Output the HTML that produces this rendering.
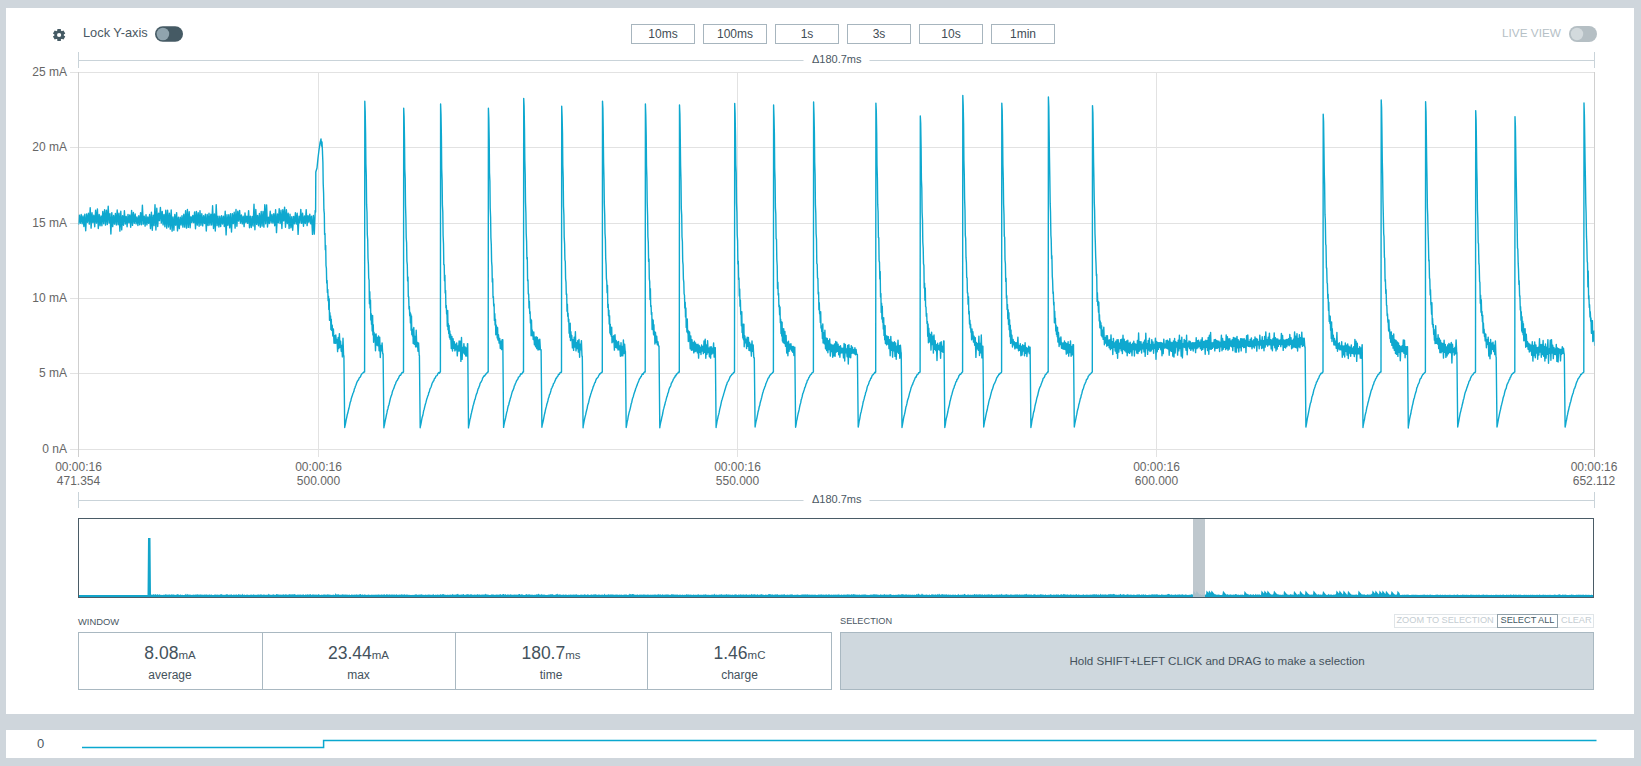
<!DOCTYPE html>
<html><head><meta charset="utf-8">
<style>
*{margin:0;padding:0;box-sizing:border-box}
html,body{width:1641px;height:766px;overflow:hidden;background:#cfd6dc;font-family:"Liberation Sans",sans-serif}
.abs{position:absolute}
#panel{position:absolute;left:6px;top:8px;width:1628px;height:706px;background:#fff}
#strip{position:absolute;left:6px;top:730px;width:1628px;height:28px;background:#fff}
.t{position:absolute;white-space:nowrap;line-height:1}
.btn{position:absolute;top:24px;width:64px;height:20px;border:1px solid #a7b5be;background:#fff;color:#3f4c55;font-size:12px;text-align:center;line-height:18px}
.cell{position:absolute;top:632px;height:58px;text-align:center;color:#44525c}
.cell .v{position:absolute;left:0;right:0;top:13px;font-size:17.5px;line-height:1}
.cell .v small{font-size:11.5px}
.cell .l{position:absolute;left:0;right:0;top:37px;font-size:12px;line-height:1}
</style></head><body>
<div id="panel"></div>
<div id="strip"></div>
<svg class="abs" style="left:0;top:0" width="1641" height="766" viewBox="0 0 1641 766">
  <!-- gear -->
  <g transform="translate(59.1,35)" fill="#455a64">
    <circle r="4.7"/>
    <rect x="-1.8" y="-6.1" width="3.6" height="12.2" rx="0.3"/>
    <rect x="-1.8" y="-6.1" width="3.6" height="12.2" rx="0.3" transform="rotate(60)"/>
    <rect x="-1.8" y="-6.1" width="3.6" height="12.2" rx="0.3" transform="rotate(120)"/>
    <circle r="2.1" fill="#fff"/>
  </g>
  <!-- lock toggle -->
  <rect x="155" y="26.2" width="28" height="15.6" rx="7.8" fill="#455a64"/>
  <circle cx="162.9" cy="34" r="6.3" fill="#90a4ae"/>
  <!-- live view toggle -->
  <rect x="1569" y="26" width="28" height="16" rx="8" fill="#b5bfc4"/>
  <circle cx="1577" cy="34" r="6.2" fill="#d3dadd"/>

  <!-- delta lines -->
  <g stroke="#c9d3d9" stroke-width="1" fill="none">
    <path d="M78.5,60.5 H803.5 M869.5,60.5 H1594.5 M78.5,52 V68 M1594.5,52 V68"/>
    <path d="M78.5,500.5 H803.5 M869.5,500.5 H1594.5 M78.5,492 V508 M1594.5,492 V508"/>
  </g>
  <!-- grid -->
  <g stroke="#e2e2e2" stroke-width="1" fill="none">
    <path d="M70,72.5 H1594 M70,147.5 H1594 M70,223.5 H1594 M70,298.5 H1594 M70,373.5 H1594 M70,449.5 H1594"/>
    <path d="M318.5,72 V457 M737.5,72 V457 M1156.5,72 V457"/>
  </g>
  <g stroke="#cfcfcf" stroke-width="1" fill="none">
    <path d="M78.5,72 V457 M1594.5,72 V457"/>
  </g>
  <!-- y labels -->
  <g font-family="Liberation Sans" font-size="12" fill="#666" text-anchor="end">
    <text x="67" y="75.7">25 mA</text>
    <text x="67" y="150.7">20 mA</text>
    <text x="67" y="226.7">15 mA</text>
    <text x="67" y="301.7">10 mA</text>
    <text x="67" y="376.7">5 mA</text>
    <text x="67" y="452.7">0 nA</text>
  </g>
  <g font-family="Liberation Sans" font-size="12" fill="#666" text-anchor="middle">
    <text x="78.5" y="471">00:00:16</text><text x="78.5" y="485">471.354</text>
    <text x="318.5" y="471">00:00:16</text><text x="318.5" y="485">500.000</text>
    <text x="737.5" y="471">00:00:16</text><text x="737.5" y="485">550.000</text>
    <text x="1156.5" y="471">00:00:16</text><text x="1156.5" y="485">600.000</text>
    <text x="1594" y="471">00:00:16</text><text x="1594" y="485">652.112</text>
  </g>
  <!-- waveform -->
  <clipPath id="pc"><rect x="78.5" y="60" width="1516" height="400"/></clipPath>
  <path clip-path="url(#pc)" d="M78.5,224.8 79.4,215.1 80.3,223.2 81.2,214.5 82.1,223.7 83.0,215.9 83.9,226.5 84.8,214.2 85.7,230.8 86.6,214.0 87.5,222.2 88.4,213.3 89.3,224.1 90.2,207.8 91.1,228.1 92.0,212.7 92.9,222.5 93.8,215.3 94.7,226.8 95.6,210.3 96.5,223.1 97.4,208.9 98.3,228.5 99.2,214.5 100.1,225.8 101.0,215.9 101.9,225.7 102.8,211.4 103.7,223.7 104.6,209.8 105.5,225.1 106.4,210.1 107.3,224.5 108.2,206.3 109.1,223.0 110.0,213.6 110.9,234.0 111.8,212.6 112.7,226.6 113.6,215.5 114.5,224.1 115.4,213.5 116.3,225.0 117.2,210.0 118.1,224.8 119.0,213.1 119.9,231.1 120.8,211.3 121.7,229.9 122.6,215.6 123.5,225.2 124.4,210.7 125.3,224.0 126.2,216.4 127.1,226.7 128.0,214.4 128.9,222.7 129.8,214.9 130.7,227.3 131.6,210.4 132.5,225.4 133.4,212.5 134.3,223.2 135.2,214.0 136.1,223.9 137.0,216.9 137.9,225.5 138.8,215.7 139.7,224.7 140.6,212.6 141.5,224.7 142.4,205.2 143.3,224.1 144.2,216.1 145.1,226.1 146.0,214.6 146.9,224.9 147.8,217.0 148.7,223.3 149.6,214.5 150.5,228.6 151.4,212.3 152.3,230.3 153.2,215.2 154.1,225.6 155.0,204.8 155.9,230.0 156.8,208.2 157.7,226.5 158.6,213.1 159.5,220.6 160.4,207.4 161.3,223.0 162.2,211.4 163.1,224.9 164.0,214.4 164.9,226.7 165.8,210.1 166.7,228.1 167.6,210.2 168.5,227.0 169.4,213.2 170.3,229.1 171.2,210.0 172.1,231.1 173.0,217.0 173.9,230.2 174.8,214.5 175.7,225.2 176.6,212.6 177.5,230.9 178.4,217.1 179.3,228.6 180.2,217.2 181.1,225.0 182.0,215.7 182.9,227.1 183.8,214.3 184.7,227.1 185.6,210.7 186.5,228.1 187.4,209.5 188.3,227.4 189.2,211.7 190.1,227.8 191.0,216.6 191.9,222.4 192.8,215.4 193.7,222.6 194.6,211.9 195.5,228.7 196.4,211.4 197.3,225.1 198.2,212.7 199.1,226.3 200.0,210.8 200.9,225.3 201.8,213.8 202.7,225.9 203.6,215.7 204.5,223.5 205.4,214.1 206.3,231.0 207.2,214.5 208.1,225.5 209.0,213.3 209.9,225.1 210.8,214.3 211.7,225.0 212.6,205.8 213.5,228.5 214.4,214.0 215.3,231.0 216.2,204.6 217.1,225.6 218.0,216.2 218.9,227.0 219.8,216.3 220.7,226.5 221.6,215.8 222.5,224.0 223.4,216.3 224.3,226.5 225.2,211.3 226.1,234.9 227.0,214.8 227.9,225.2 228.8,214.8 229.7,227.9 230.6,213.6 231.5,232.0 232.4,213.8 233.3,223.6 234.2,212.2 235.1,228.1 236.0,209.5 236.9,226.3 237.8,211.1 238.7,221.1 239.6,210.4 240.5,223.1 241.4,215.0 242.3,223.9 243.2,216.1 244.1,226.6 245.0,212.9 245.9,222.6 246.8,216.2 247.7,223.4 248.6,210.6 249.5,227.8 250.4,216.1 251.3,227.5 252.2,216.5 253.1,226.0 254.0,204.3 254.9,229.8 255.8,209.5 256.7,224.4 257.6,215.4 258.5,225.7 259.4,213.5 260.3,227.2 261.2,211.5 262.1,226.1 263.0,211.5 263.9,227.1 264.8,204.7 265.7,223.7 266.6,204.9 267.5,227.0 268.4,217.1 269.3,223.5 270.2,211.3 271.1,222.8 272.0,214.5 272.9,223.1 273.8,213.7 274.7,225.8 275.6,209.7 276.5,232.6 277.4,214.0 278.3,222.8 279.2,208.7 280.1,223.5 281.0,210.2 281.9,228.5 282.8,209.8 283.7,220.9 284.6,207.1 285.5,227.3 286.4,209.7 287.3,223.6 288.2,213.3 289.1,228.5 290.0,214.3 290.9,227.7 291.8,216.6 292.7,230.3 293.6,216.4 294.5,223.7 295.4,212.7 296.3,224.0 297.2,213.3 298.1,234.4 299.0,216.3 299.9,222.9 300.8,209.4 301.7,223.4 302.6,213.3 303.5,226.2 304.4,216.0 305.3,223.5 306.2,209.6 307.1,225.6 308.0,215.6 308.9,222.2 309.8,214.1 310.7,223.8 311.6,216.1 312.5,234.4 313.4,215.5 314.3,234.1 315.2,210.5 315.6,212.0 315.8,172.0 317.0,168.0 318.0,158.0 319.0,150.0 320.0,143.0 321.0,139.0 321.5,146.0 322.0,142.0 322.5,152.0 322.5,153.0 322.9,162.5 323.2,183.5 323.6,193.0 323.9,209.9 324.3,213.6 324.6,234.5 325.0,233.5 325.3,249.8 325.7,245.5 326.0,265.5 326.4,268.4 326.7,283.0 327.1,280.4 327.4,292.5 327.8,289.5 328.1,300.8 328.5,296.1 328.8,309.6 329.2,298.7 329.5,320.3 329.9,312.6 330.2,319.6 330.6,316.0 330.9,329.6 331.3,319.2 331.6,330.3 332.2,325.1 332.8,336.0 333.4,328.9 334.0,343.1 334.6,335.8 335.2,343.4 335.8,335.0 336.4,343.1 337.0,339.5 337.6,351.6 338.2,337.4 338.8,348.6 339.4,333.6 340.0,347.4 340.6,341.3 341.2,351.2 341.8,345.5 342.4,356.9 343.0,338.3 343.6,355.8 343.9,355.8 344.7,427.6 344.7,427.0 345.2,425.0 345.7,422.6 346.2,419.7 346.7,417.6 347.3,414.5 347.8,413.1 348.3,410.6 348.8,408.8 349.3,406.7 349.8,404.3 350.3,402.0 350.8,401.2 351.3,398.4 351.8,397.1 352.4,395.2 352.9,393.5 353.4,392.5 353.9,391.3 354.4,388.9 354.9,388.0 355.4,386.2 355.9,385.2 356.4,383.8 356.9,382.3 357.5,381.2 358.0,380.2 358.5,380.0 359.0,378.6 359.5,377.4 360.0,377.4 360.5,376.7 361.0,375.3 361.5,374.3 362.0,373.8 362.6,373.1 363.1,372.9 363.6,372.2 364.1,372.0 364.6,372.0 364.8,101.3 365.2,111.5 365.6,133.7 365.9,164.1 366.3,175.6 366.6,204.4 367.0,212.3 367.3,234.5 367.7,239.6 368.0,258.0 368.4,264.2 368.7,278.2 369.1,280.1 369.4,303.8 369.8,291.7 370.1,307.9 370.5,299.9 370.8,320.0 371.2,313.6 371.5,324.3 371.9,320.8 372.2,331.1 372.6,315.5 372.9,334.9 373.3,324.8 373.6,342.3 374.0,332.2 374.3,337.9 374.9,334.3 375.5,350.7 376.1,333.9 376.7,345.0 377.3,337.5 377.9,345.8 378.5,335.9 379.1,350.8 379.7,337.2 380.3,357.5 380.9,345.4 381.5,350.9 382.1,343.0 382.7,353.8 383.1,353.8 383.9,427.7 383.9,427.0 384.4,425.0 384.9,422.3 385.4,419.8 385.9,417.6 386.4,415.0 386.9,412.9 387.4,410.1 387.9,408.9 388.4,406.2 388.9,405.0 389.4,402.8 389.9,400.5 390.4,398.4 390.9,396.8 391.4,395.6 391.9,394.0 392.4,391.7 392.9,390.2 393.4,389.2 394.0,387.9 394.5,386.3 395.0,384.8 395.5,384.0 396.0,382.2 396.5,381.4 397.0,380.5 397.5,380.1 398.0,378.8 398.5,378.2 399.0,376.9 399.5,375.8 400.0,375.1 400.5,375.3 401.0,374.4 401.5,373.4 402.0,372.5 402.5,372.7 403.0,372.5 403.5,372.0 403.7,108.2 404.1,116.9 404.5,138.9 404.8,169.0 405.2,178.1 405.5,205.1 405.9,218.1 406.2,237.8 406.6,242.7 406.9,261.1 407.3,264.8 407.6,280.9 408.0,276.9 408.3,296.8 408.7,296.7 409.0,309.1 409.4,306.4 409.7,315.8 410.1,312.2 410.4,322.9 410.8,314.0 411.1,330.3 411.5,315.9 411.8,334.5 412.2,330.4 412.5,336.0 412.9,329.1 413.2,343.6 413.8,327.5 414.4,344.3 415.0,336.4 415.6,346.9 416.2,330.3 416.8,346.8 417.4,342.4 418.0,351.3 418.6,343.0 419.2,355.5 419.4,355.5 420.2,427.8 420.2,427.0 420.7,425.1 421.2,422.7 421.7,419.6 422.2,417.2 422.7,415.8 423.2,413.4 423.7,410.5 424.2,409.2 424.7,406.8 425.2,404.8 425.8,402.9 426.3,400.9 426.8,398.9 427.3,397.5 427.8,395.9 428.3,395.0 428.8,392.4 429.3,391.9 429.8,389.6 430.3,388.3 430.8,387.5 431.3,386.2 431.8,384.5 432.3,382.9 432.8,382.3 433.3,381.1 433.8,380.7 434.3,378.9 434.8,378.2 435.3,378.0 435.9,376.1 436.4,375.9 436.9,375.6 437.4,375.0 437.9,373.5 438.4,373.0 438.9,372.5 439.4,373.2 439.9,372.0 440.4,372.0 440.6,104.0 441.0,114.2 441.4,136.2 441.7,168.7 442.1,180.1 442.4,204.7 442.8,212.1 443.1,235.2 443.5,243.9 443.8,264.7 444.2,264.6 444.5,280.8 444.9,275.3 445.2,293.0 445.6,290.5 445.9,307.7 446.3,305.5 446.6,314.1 447.0,314.1 447.3,326.2 447.7,310.4 448.0,329.8 448.4,323.6 448.7,333.6 449.1,325.5 449.4,337.2 449.8,330.9 450.1,339.1 450.7,334.4 451.3,348.5 451.9,336.4 452.5,351.0 453.1,338.8 453.7,348.3 454.3,341.7 454.9,350.9 455.5,344.2 456.1,349.8 456.7,343.0 457.3,355.9 457.9,346.0 458.5,351.0 459.1,341.0 459.7,351.0 460.3,341.2 460.9,361.4 461.5,337.4 462.1,359.4 462.7,347.5 463.3,352.7 463.9,343.6 464.5,354.0 465.1,346.9 465.7,356.0 466.3,347.9 466.9,356.1 467.5,343.6 467.7,343.6 468.5,427.9 468.5,427.0 469.0,424.9 469.5,422.2 470.0,419.2 470.5,417.7 471.0,414.8 471.5,412.9 472.0,410.5 472.5,408.8 473.0,406.1 473.6,404.2 474.1,402.3 474.6,400.3 475.1,399.3 475.6,397.2 476.1,395.2 476.6,393.7 477.1,392.8 477.6,390.7 478.1,388.9 478.6,388.2 479.1,386.6 479.6,385.7 480.1,383.4 480.6,382.7 481.1,382.0 481.6,381.0 482.1,380.0 482.6,378.1 483.1,377.5 483.7,376.4 484.2,375.7 484.7,376.0 485.2,374.8 485.7,374.6 486.2,373.4 486.7,373.5 487.2,372.6 487.7,372.0 488.2,372.0 488.4,108.2 488.8,117.9 489.2,138.8 489.5,172.7 489.9,181.0 490.2,207.8 490.6,217.3 490.9,237.6 491.3,244.7 491.6,261.6 492.0,266.4 492.3,282.0 492.7,278.6 493.0,297.5 493.4,296.6 493.7,305.9 494.1,303.9 494.4,320.4 494.8,313.6 495.1,325.1 495.5,319.2 495.8,334.8 496.2,325.0 496.5,332.1 496.9,326.9 497.2,337.9 497.6,327.6 497.9,340.0 498.5,334.7 499.1,343.1 499.7,338.4 500.3,348.4 500.9,341.2 501.5,349.6 502.1,339.8 502.8,339.8 503.6,427.4 503.6,427.0 504.1,424.3 504.6,421.9 505.1,420.1 505.6,417.9 506.2,414.9 506.7,412.4 507.2,410.9 507.7,408.2 508.2,405.9 508.7,405.0 509.2,402.5 509.7,401.1 510.2,398.8 510.7,397.6 511.3,395.4 511.8,393.4 512.3,391.6 512.8,390.7 513.3,389.4 513.8,388.3 514.3,386.0 514.8,385.3 515.3,383.8 515.8,382.7 516.4,381.2 516.9,380.3 517.4,379.6 517.9,379.1 518.4,377.2 518.9,376.9 519.4,376.5 519.9,376.0 520.4,374.4 520.9,373.7 521.5,374.1 522.0,373.7 522.5,372.7 523.0,371.8 523.5,372.0 523.7,98.4 524.1,106.0 524.5,128.8 524.8,159.3 525.2,174.0 525.5,201.7 525.9,212.9 526.2,233.1 526.6,241.4 526.9,259.1 527.3,257.5 527.6,280.8 528.0,280.0 528.3,294.0 528.7,294.0 529.0,308.0 529.4,301.2 529.7,313.5 530.1,311.6 530.4,322.9 530.8,319.1 531.1,335.8 531.5,320.2 531.8,332.5 532.2,329.9 532.5,335.9 532.9,332.0 533.2,339.5 533.8,332.0 534.4,344.7 535.0,337.1 535.6,346.7 536.2,336.7 536.8,348.6 537.4,337.5 538.0,350.0 538.6,340.0 539.2,349.6 539.8,339.2 540.4,349.7 541.1,349.7 541.9,427.2 541.9,427.0 542.4,424.2 542.9,422.4 543.4,420.0 543.9,417.3 544.4,414.6 544.9,412.8 545.4,410.2 545.9,408.1 546.4,406.4 546.9,404.0 547.4,402.5 547.9,400.7 548.4,398.3 548.9,397.3 549.4,394.9 549.9,394.1 550.4,392.5 550.9,390.7 551.4,388.7 552.0,387.8 552.5,386.3 553.0,385.7 553.5,383.5 554.0,383.2 554.5,382.2 555.0,380.8 555.5,379.9 556.0,378.2 556.5,378.3 557.0,376.9 557.5,376.7 558.0,375.9 558.5,374.3 559.0,374.5 559.5,374.1 560.0,372.6 560.5,372.5 561.0,372.6 561.5,372.0 561.7,106.2 562.1,116.2 562.5,133.1 562.8,164.9 563.2,177.2 563.5,206.2 563.9,214.7 564.2,237.1 564.6,244.0 564.9,259.6 565.3,261.7 565.6,278.8 566.0,282.2 566.3,294.4 566.7,294.0 567.0,311.2 567.4,304.1 567.7,316.3 568.1,313.2 568.4,321.8 568.8,319.1 569.1,333.3 569.5,325.2 569.8,337.3 570.2,323.3 570.5,340.6 570.9,331.6 571.2,339.5 571.8,335.5 572.4,347.9 573.0,339.6 573.6,350.4 574.2,337.1 574.8,347.1 575.4,331.8 576.0,350.9 576.6,342.6 577.2,348.5 577.8,340.6 578.4,352.1 579.0,339.4 579.6,357.3 580.2,344.1 580.8,349.9 581.4,340.6 582.0,356.1 582.3,356.1 583.1,427.7 583.1,427.0 583.6,424.2 584.1,421.3 584.6,418.9 585.1,416.6 585.6,414.9 586.1,412.4 586.6,410.3 587.1,408.6 587.6,405.6 588.2,403.7 588.7,402.2 589.2,399.6 589.7,397.7 590.2,396.3 590.7,394.3 591.2,392.9 591.7,391.2 592.2,390.1 592.7,388.6 593.2,386.7 593.7,385.9 594.2,384.4 594.7,382.8 595.2,382.5 595.7,380.6 596.2,379.4 596.7,378.4 597.2,378.1 597.8,377.5 598.3,376.6 598.8,375.4 599.3,374.6 599.8,373.6 600.3,373.8 600.8,373.2 601.3,372.5 601.8,372.5 602.3,372.0 602.5,101.1 602.9,108.4 603.2,127.4 603.6,162.5 604.0,179.3 604.3,203.2 604.7,214.4 605.0,233.1 605.4,239.3 605.7,258.2 606.1,264.8 606.4,278.3 606.8,281.9 607.1,292.8 607.5,285.3 607.8,307.4 608.2,304.1 608.5,315.7 608.9,310.1 609.2,324.1 609.6,315.7 609.9,333.0 610.3,324.2 610.6,334.6 611.0,329.7 611.3,336.2 611.7,327.3 612.0,342.8 612.6,336.6 613.2,341.9 613.8,335.6 614.4,350.1 615.0,334.7 615.6,347.4 616.2,340.4 616.8,348.0 617.4,342.0 618.0,350.0 618.6,341.5 619.2,349.7 619.8,346.0 620.4,356.3 621.0,342.6 621.6,355.7 622.2,346.4 622.8,355.9 623.4,340.0 624.0,353.6 624.6,344.1 625.2,351.3 625.4,351.3 626.2,427.6 626.2,427.0 626.7,425.0 627.2,421.6 627.7,419.9 628.2,416.5 628.7,414.4 629.2,412.1 629.7,410.5 630.2,408.6 630.7,406.3 631.2,403.8 631.7,402.5 632.2,399.9 632.7,398.0 633.2,397.0 633.7,394.9 634.2,393.3 634.7,391.7 635.2,390.6 635.7,388.5 636.2,387.5 636.7,386.0 637.2,384.9 637.7,383.1 638.2,382.3 638.7,381.0 639.2,379.6 639.7,378.5 640.2,378.1 640.7,376.6 641.2,376.8 641.7,375.1 642.2,374.3 642.7,373.7 643.2,374.2 643.7,373.0 644.2,372.3 644.7,371.8 645.2,372.0 645.4,104.0 645.8,114.9 646.2,135.1 646.5,165.4 646.9,177.8 647.2,202.6 647.6,215.5 647.9,236.8 648.3,242.4 648.6,261.5 649.0,259.0 649.3,278.9 649.7,281.7 650.0,299.5 650.4,288.6 650.7,306.6 651.1,305.7 651.4,314.4 651.8,312.5 652.1,329.6 652.5,319.2 652.8,329.2 653.2,320.3 653.5,334.2 653.9,324.6 654.2,335.4 654.6,331.5 654.9,344.0 655.5,332.5 656.1,342.6 656.7,336.1 657.3,344.8 657.9,341.6 658.5,346.0 659.0,346.0 659.8,427.8 659.8,427.0 660.3,424.3 660.8,421.8 661.3,420.2 661.8,417.3 662.3,415.5 662.8,413.0 663.3,410.1 663.8,408.4 664.3,406.4 664.8,404.8 665.3,402.4 665.8,400.9 666.3,398.9 666.8,396.8 667.3,395.9 667.8,393.3 668.3,392.6 668.8,390.3 669.3,388.6 669.8,387.4 670.3,386.8 670.8,385.7 671.3,383.3 671.8,382.7 672.3,381.6 672.8,380.9 673.3,379.2 673.8,378.6 674.3,377.5 674.8,377.3 675.3,375.8 675.8,375.9 676.3,374.5 676.8,373.8 677.3,373.8 677.8,373.1 678.3,372.2 678.8,372.5 679.3,372.0 679.5,105.0 679.9,114.1 680.2,132.8 680.6,165.7 681.0,180.4 681.3,208.6 681.7,215.1 682.0,236.8 682.4,241.7 682.7,261.1 683.1,264.9 683.4,279.1 683.8,282.2 684.1,293.7 684.5,295.3 684.8,308.1 685.2,302.3 685.5,317.0 685.9,308.0 686.2,327.6 686.6,320.7 686.9,331.9 687.3,318.9 687.6,332.9 688.0,330.2 688.3,341.5 688.7,331.2 689.0,341.1 689.6,332.0 690.2,348.7 690.8,336.0 691.4,350.3 692.0,339.7 692.6,350.0 693.2,342.6 693.8,352.9 694.4,341.1 695.0,351.6 695.6,342.9 696.2,351.0 696.8,344.7 697.4,352.9 698.0,344.1 698.6,358.1 699.2,345.5 699.8,352.3 700.4,347.3 701.0,354.5 701.6,345.0 702.2,351.1 702.8,346.5 703.4,353.6 704.0,341.0 704.6,352.4 705.2,339.1 705.8,358.3 706.4,345.0 707.0,354.3 707.6,340.7 708.2,352.6 708.8,348.3 709.4,356.7 710.0,346.9 710.6,358.1 711.2,346.7 711.8,354.1 712.4,348.3 713.0,353.0 713.6,342.9 714.2,357.1 714.8,347.6 715.3,347.6 716.1,427.6 716.1,427.0 716.6,424.2 717.1,421.2 717.6,419.2 718.1,416.4 718.7,414.4 719.2,412.2 719.7,409.3 720.2,407.3 720.7,405.3 721.2,402.8 721.7,400.5 722.2,399.2 722.7,397.4 723.3,395.5 723.8,393.6 724.3,392.1 724.8,390.3 725.3,388.7 725.8,387.0 726.3,385.4 726.8,384.4 727.3,382.4 727.9,381.6 728.4,380.9 728.9,379.7 729.4,378.6 729.9,377.2 730.4,376.5 730.9,375.7 731.4,375.2 731.9,374.3 732.5,374.0 733.0,373.7 733.5,372.4 734.0,372.5 734.5,372.0 734.7,103.4 735.1,113.3 735.5,135.2 735.8,164.8 736.2,172.8 736.5,202.7 736.9,212.2 737.2,234.7 737.6,240.6 737.9,264.1 738.3,261.1 738.6,279.4 739.0,277.9 739.3,296.1 739.7,289.0 740.0,306.3 740.4,299.9 740.7,314.2 741.1,312.0 741.4,325.8 741.8,311.8 742.1,332.6 742.5,324.5 742.8,337.9 743.2,324.3 743.5,339.7 743.9,324.1 744.2,346.8 744.8,335.9 745.4,342.7 746.0,339.2 746.6,348.5 747.2,337.3 747.8,346.2 748.4,337.4 749.0,350.4 749.6,342.5 750.2,350.9 750.8,344.2 751.4,356.1 752.0,340.9 752.6,351.4 753.2,345.0 753.8,357.7 754.3,357.7 755.1,427.0 755.1,427.0 755.6,423.9 756.1,421.2 756.6,419.4 757.1,416.9 757.6,414.3 758.1,411.7 758.7,409.5 759.2,406.8 759.7,405.6 760.2,402.7 760.7,401.0 761.2,399.3 761.7,397.4 762.2,395.1 762.7,393.1 763.2,391.7 763.7,389.6 764.2,388.9 764.8,386.8 765.3,386.0 765.8,383.9 766.3,382.8 766.8,381.4 767.3,380.5 767.8,379.1 768.3,377.9 768.8,377.8 769.3,376.4 769.8,375.5 770.3,374.8 770.9,374.4 771.4,373.7 771.9,373.4 772.4,372.9 772.9,372.2 773.4,372.0 773.6,105.0 774.0,116.7 774.4,134.7 774.7,168.4 775.1,180.1 775.4,207.9 775.8,213.9 776.1,238.7 776.5,239.2 776.8,259.3 777.2,265.7 777.5,288.5 777.9,282.2 778.2,294.9 778.6,293.4 778.9,306.7 779.3,305.1 779.6,314.7 780.0,307.0 780.3,322.7 780.7,319.1 781.0,333.5 781.4,321.8 781.7,336.1 782.1,322.1 782.4,341.1 782.8,328.6 783.1,342.5 783.7,328.6 784.3,343.5 784.9,331.5 785.5,346.3 786.1,335.5 786.7,353.1 787.3,342.1 787.9,355.7 788.5,341.1 789.1,351.4 789.7,344.2 790.3,349.0 790.9,343.6 791.5,350.9 792.1,346.5 792.7,352.3 793.3,346.5 793.9,355.5 794.5,347.1 794.8,347.1 795.6,427.3 795.6,427.0 796.1,424.6 796.6,420.9 797.1,419.2 797.6,416.2 798.1,413.8 798.7,411.5 799.2,409.4 799.7,406.5 800.2,404.4 800.7,402.9 801.2,399.7 801.7,398.4 802.2,396.5 802.7,393.9 803.2,392.8 803.7,391.2 804.2,389.8 804.8,387.5 805.3,386.8 805.8,384.8 806.3,383.4 806.8,382.6 807.3,380.4 807.8,380.1 808.3,378.9 808.8,377.5 809.3,377.2 809.8,375.8 810.3,375.1 810.9,374.5 811.4,374.2 811.9,372.9 812.4,372.7 812.9,372.3 813.4,372.0 813.6,102.0 814.0,113.7 814.4,132.7 814.7,162.2 815.1,174.4 815.4,204.5 815.8,213.4 816.1,233.5 816.5,239.0 816.8,263.4 817.2,264.3 817.5,278.1 817.9,278.4 818.2,293.9 818.6,292.2 818.9,309.7 819.3,302.8 819.6,313.8 820.0,313.2 820.3,322.5 820.7,311.7 821.0,328.0 821.4,325.7 821.7,331.4 822.1,329.7 822.4,338.6 822.8,324.0 823.1,342.9 823.7,332.6 824.3,343.8 824.9,330.2 825.5,348.7 826.1,337.9 826.7,350.6 827.3,338.5 827.9,352.7 828.5,340.7 829.1,349.6 829.7,338.9 830.3,356.1 830.9,344.1 831.5,351.6 832.1,344.9 832.7,357.3 833.3,345.2 833.9,355.8 834.5,344.0 835.1,356.2 835.7,341.5 836.3,352.1 836.9,342.3 837.5,351.2 838.1,344.3 838.7,354.7 839.3,346.5 839.9,357.3 840.5,345.8 841.1,353.0 841.7,348.1 842.3,352.9 842.9,348.3 843.5,357.9 844.1,343.4 844.7,361.0 845.3,344.5 845.9,352.9 846.5,349.0 847.1,356.8 847.7,345.4 848.3,364.1 848.9,344.6 849.5,357.1 850.1,348.8 850.7,357.7 851.3,345.7 851.9,353.2 852.5,347.2 853.1,353.1 853.7,349.7 854.3,353.7 854.9,347.7 855.5,354.7 856.1,349.5 856.7,354.5 857.4,354.5 858.2,426.0 858.2,427.0 858.7,424.5 859.2,421.2 859.7,419.1 860.2,415.9 860.7,413.2 861.2,411.7 861.7,409.2 862.2,407.1 862.7,404.7 863.2,401.8 863.7,400.4 864.2,398.5 864.7,396.3 865.2,395.0 865.7,392.4 866.2,391.5 866.7,389.6 867.2,387.1 867.7,385.6 868.2,385.0 868.7,383.8 869.2,381.7 869.7,380.7 870.2,380.1 870.7,378.3 871.2,378.2 871.7,376.8 872.2,375.4 872.7,375.0 873.2,374.6 873.7,373.8 874.2,373.5 874.7,372.3 875.2,372.7 875.7,372.0 875.9,103.1 876.3,111.0 876.7,132.8 877.0,164.9 877.4,178.6 877.7,204.4 878.1,211.7 878.4,237.6 878.8,237.7 879.1,260.5 879.5,262.5 879.8,278.9 880.2,271.4 880.5,297.1 880.9,293.4 881.2,312.5 881.6,303.3 881.9,319.0 882.3,306.1 882.6,322.2 883.0,317.9 883.3,329.0 883.7,317.7 884.0,335.4 884.4,325.3 884.7,339.7 885.1,325.8 885.4,343.5 886.0,335.5 886.6,344.9 887.2,336.3 887.8,344.0 888.4,336.7 889.0,348.6 889.6,339.7 890.2,355.7 890.8,336.4 891.4,350.3 892.0,342.0 892.6,357.1 893.2,342.8 893.8,350.9 894.4,341.7 895.0,356.4 895.6,343.0 896.2,359.3 896.8,346.3 897.4,352.1 898.0,340.1 898.6,353.4 899.2,345.6 899.8,358.2 900.4,345.1 901.0,352.6 901.2,352.6 902.0,427.5 902.0,427.0 902.5,424.5 903.0,421.6 903.5,418.7 904.0,416.2 904.5,414.4 905.0,412.1 905.5,409.4 906.0,406.7 906.5,405.4 907.0,403.2 907.5,400.5 908.0,399.0 908.5,397.5 909.0,395.6 909.5,393.4 910.0,391.7 910.5,390.2 911.0,388.1 911.6,386.6 912.1,385.2 912.6,384.5 913.1,382.8 913.6,381.8 914.1,380.4 914.6,379.5 915.1,378.0 915.6,377.0 916.1,377.2 916.6,375.7 917.1,374.6 917.6,374.5 918.1,374.1 918.6,372.8 919.1,372.9 919.6,372.2 920.1,372.0 920.3,116.0 920.7,123.4 921.1,146.8 921.4,179.5 921.8,187.7 922.1,212.3 922.5,220.2 922.8,242.1 923.2,248.1 923.5,263.6 923.9,265.5 924.2,288.0 924.6,283.3 924.9,300.3 925.3,287.9 925.6,306.7 926.0,307.0 926.3,316.3 926.7,313.4 927.0,323.6 927.4,321.5 927.7,336.3 928.1,323.9 928.4,342.7 928.8,328.1 929.1,336.9 929.5,333.1 929.8,342.0 930.4,334.6 931.0,350.1 931.6,332.3 932.2,344.5 932.8,336.3 933.4,353.1 934.0,334.9 934.6,349.3 935.2,340.7 935.8,350.6 936.4,344.6 937.0,360.5 937.6,343.1 938.2,349.6 938.8,345.4 939.4,350.0 940.0,342.8 940.6,358.2 941.2,341.8 941.8,351.2 942.4,346.5 943.0,352.4 943.6,341.0 944.0,341.0 944.8,427.6 944.8,427.0 945.3,424.8 945.8,421.0 946.3,418.4 946.8,416.6 947.3,414.3 947.9,411.5 948.4,408.7 948.9,406.8 949.4,404.8 949.9,401.8 950.4,400.0 950.9,397.9 951.4,395.8 951.9,394.4 952.4,392.3 952.9,390.6 953.4,388.9 954.0,387.9 954.5,385.6 955.0,385.1 955.5,383.1 956.0,381.6 956.5,381.5 957.0,379.5 957.5,379.3 958.0,378.2 958.5,377.3 959.0,375.5 959.5,375.1 960.1,374.0 960.6,374.3 961.1,373.7 961.6,372.9 962.1,372.3 962.6,372.0 962.8,95.4 963.2,105.0 963.6,124.2 963.9,159.8 964.3,175.0 964.6,198.7 965.0,210.3 965.3,235.2 965.7,238.7 966.0,257.4 966.4,262.4 966.7,277.5 967.1,278.0 967.4,293.1 967.8,292.9 968.1,304.2 968.5,296.6 968.8,314.0 969.2,311.3 969.5,324.1 969.9,320.1 970.2,327.9 970.6,324.3 970.9,332.3 971.3,329.6 971.6,339.8 972.0,329.0 972.3,338.7 972.9,331.6 973.5,342.1 974.1,336.3 974.7,345.2 975.3,337.8 975.9,357.4 976.5,342.5 977.1,348.8 977.7,343.6 978.3,350.3 978.9,336.1 979.5,355.5 980.1,343.5 980.7,352.7 981.3,334.9 981.9,357.9 982.5,346.2 982.9,346.2 983.7,426.9 983.7,427.0 984.2,423.8 984.7,420.9 985.2,419.2 985.7,416.3 986.3,413.4 986.8,411.2 987.3,409.5 987.8,406.3 988.3,404.5 988.8,401.9 989.3,399.8 989.8,398.6 990.3,396.6 990.9,394.1 991.4,392.1 991.9,390.4 992.4,389.4 992.9,387.7 993.4,386.0 993.9,384.4 994.4,383.6 995.0,382.4 995.5,381.3 996.0,379.9 996.5,378.4 997.0,377.2 997.5,377.1 998.0,375.8 998.5,375.4 999.0,373.9 999.6,374.2 1000.1,373.1 1000.6,373.2 1001.1,372.8 1001.6,372.0 1001.8,103.1 1002.2,110.5 1002.6,135.5 1002.9,164.5 1003.3,178.9 1003.6,203.7 1004.0,214.3 1004.3,236.1 1004.7,237.4 1005.0,259.7 1005.4,263.8 1005.7,281.4 1006.1,278.2 1006.4,298.0 1006.8,295.7 1007.1,309.5 1007.5,304.5 1007.8,318.8 1008.2,309.6 1008.5,324.6 1008.9,312.8 1009.2,329.8 1009.6,319.8 1009.9,336.8 1010.3,325.1 1010.6,343.4 1011.0,330.0 1011.3,342.8 1011.9,335.3 1012.5,347.0 1013.1,339.4 1013.7,344.9 1014.3,341.8 1014.9,348.9 1015.5,342.8 1016.1,347.9 1016.7,342.7 1017.3,348.1 1017.9,337.1 1018.5,350.8 1019.1,345.7 1019.7,350.3 1020.3,343.8 1020.9,355.8 1021.5,346.3 1022.1,355.0 1022.7,344.8 1023.3,351.1 1023.9,345.6 1024.5,355.7 1025.1,342.7 1025.7,353.2 1026.3,347.5 1026.9,356.5 1027.5,348.1 1028.1,351.9 1028.7,346.3 1029.3,353.6 1029.9,347.3 1030.1,347.3 1030.9,427.5 1030.9,427.0 1031.4,424.6 1031.9,420.9 1032.4,418.7 1032.9,416.3 1033.4,413.0 1034.0,411.3 1034.5,409.0 1035.0,406.0 1035.5,403.8 1036.0,402.1 1036.5,399.6 1037.0,397.4 1037.5,396.1 1038.0,394.0 1038.5,391.7 1039.0,389.8 1039.5,388.3 1040.1,386.8 1040.6,386.0 1041.1,384.4 1041.6,383.1 1042.1,381.7 1042.6,380.6 1043.1,378.5 1043.6,378.0 1044.1,377.6 1044.6,376.7 1045.1,375.0 1045.7,374.5 1046.2,374.1 1046.7,373.2 1047.2,372.8 1047.7,371.8 1048.2,372.0 1048.4,97.0 1048.8,106.8 1049.1,128.7 1049.5,158.5 1049.8,176.5 1050.2,203.9 1050.5,211.9 1050.9,235.3 1051.2,239.4 1051.6,258.8 1051.9,255.7 1052.3,276.5 1052.6,280.2 1053.0,293.4 1053.3,291.9 1053.7,304.9 1054.0,302.1 1054.4,322.7 1054.7,311.1 1055.1,322.8 1055.4,318.1 1055.8,331.0 1056.1,325.1 1056.5,334.4 1056.8,328.7 1057.2,336.8 1057.5,327.1 1057.9,342.0 1058.5,332.5 1059.1,346.5 1059.7,338.2 1060.3,344.5 1060.9,336.9 1061.5,348.2 1062.1,342.9 1062.7,348.7 1063.3,342.9 1063.9,349.2 1064.5,341.0 1065.1,349.5 1065.7,342.8 1066.3,354.1 1066.9,343.6 1067.5,353.1 1068.1,341.8 1068.7,356.1 1069.3,344.6 1069.9,352.6 1070.5,340.9 1071.1,356.3 1071.7,346.5 1072.3,354.9 1072.9,344.8 1073.5,344.8 1074.3,426.8 1074.3,427.0 1074.8,424.0 1075.3,421.3 1075.8,419.1 1076.3,416.4 1076.8,414.2 1077.3,411.1 1077.8,409.2 1078.3,407.6 1078.8,404.7 1079.3,403.0 1079.8,400.8 1080.3,398.6 1080.8,397.6 1081.3,394.9 1081.8,393.7 1082.3,391.3 1082.8,389.5 1083.3,388.9 1083.8,386.9 1084.3,385.1 1084.8,384.1 1085.3,382.9 1085.8,382.0 1086.3,380.1 1086.8,379.1 1087.3,379.0 1087.8,377.8 1088.3,376.2 1088.8,375.6 1089.3,374.9 1089.8,374.6 1090.3,373.9 1090.8,373.6 1091.3,373.1 1091.8,372.4 1092.3,372.0 1092.5,105.6 1092.9,112.8 1093.2,132.5 1093.6,162.8 1093.9,177.7 1094.3,202.9 1094.6,210.4 1095.0,234.1 1095.3,241.6 1095.7,256.7 1096.0,263.4 1096.4,275.8 1096.7,274.2 1097.1,301.4 1097.4,292.8 1097.8,305.6 1098.1,301.1 1098.5,312.3 1098.8,302.2 1099.2,320.9 1099.5,314.7 1099.9,327.8 1100.2,320.9 1100.6,328.1 1100.9,322.7 1101.3,335.4 1101.6,325.8 1102.0,336.8 1102.6,330.1 1103.2,339.4 1103.8,327.1 1104.4,344.7 1105.0,337.7 1105.6,343.0 1106.2,335.7 1106.8,346.3 1107.4,335.6 1108.0,345.3 1108.6,340.1 1109.2,347.8 1109.8,339.7 1110.4,349.6 1111.0,334.9 1111.6,348.2 1112.2,341.7 1112.8,354.5 1113.4,338.4 1114.0,347.3 1114.6,342.9 1115.2,351.0 1115.8,341.2 1116.4,353.2 1117.0,339.7 1117.6,358.2 1118.2,339.8 1118.8,352.1 1119.4,343.2 1120.0,348.6 1120.6,339.8 1121.2,350.8 1121.8,339.3 1122.4,353.6 1123.0,335.3 1123.6,349.6 1124.2,339.3 1124.8,350.8 1125.4,341.8 1126.0,352.0 1126.6,341.0 1127.2,355.7 1127.8,340.3 1128.4,352.5 1129.0,343.3 1129.6,353.4 1130.2,342.2 1130.8,351.7 1131.4,344.5 1132.0,355.7 1132.6,343.1 1133.2,349.5 1133.8,341.2 1134.4,356.0 1135.0,343.5 1135.6,349.8 1136.2,344.5 1136.8,353.1 1137.4,340.5 1138.0,353.6 1138.6,333.0 1139.2,351.3 1139.8,341.7 1140.4,349.8 1141.0,341.6 1141.6,353.0 1142.2,344.3 1142.8,348.8 1143.4,342.1 1144.0,351.9 1144.6,340.3 1145.2,356.4 1145.8,333.3 1146.4,348.6 1147.0,343.7 1147.6,354.4 1148.2,340.5 1148.8,350.1 1149.4,338.2 1150.0,351.5 1150.6,344.6 1151.2,350.9 1151.8,339.6 1152.4,349.1 1153.0,342.0 1153.6,353.3 1154.2,344.5 1154.8,348.2 1155.4,338.1 1156.0,359.3 1156.6,341.5 1157.2,351.7 1157.8,342.4 1158.4,349.4 1159.0,342.7 1159.6,347.6 1160.2,342.4 1160.8,349.7 1161.4,342.8 1162.0,355.7 1162.6,343.3 1163.2,353.6 1163.8,339.1 1164.4,348.1 1165.0,344.1 1165.6,347.9 1166.2,340.4 1166.8,348.2 1167.4,340.2 1168.0,349.0 1168.6,341.2 1169.2,355.2 1169.8,338.6 1170.4,350.9 1171.0,342.2 1171.6,351.4 1172.2,342.8 1172.8,356.1 1173.4,341.0 1174.0,357.1 1174.6,338.5 1175.2,353.0 1175.8,341.8 1176.4,347.1 1177.0,342.7 1177.6,355.1 1178.2,340.3 1178.8,350.9 1179.4,335.2 1180.0,348.6 1180.6,340.5 1181.2,356.1 1181.8,337.1 1182.4,357.9 1183.0,343.6 1183.6,347.1 1184.2,339.4 1184.8,347.5 1185.4,340.7 1186.0,350.2 1186.6,335.3 1187.2,354.8 1187.8,343.0 1188.4,346.9 1189.0,341.0 1189.6,348.6 1190.2,341.5 1190.8,350.4 1191.4,343.0 1192.0,348.7 1192.6,342.8 1193.2,351.0 1193.8,342.7 1194.4,348.0 1195.0,342.7 1195.6,352.6 1196.2,337.7 1196.8,348.6 1197.4,340.8 1198.0,347.8 1198.6,340.1 1199.2,346.6 1199.8,342.3 1200.4,348.6 1201.0,339.9 1201.6,350.3 1202.2,337.6 1202.8,349.4 1203.4,341.4 1204.0,347.6 1204.6,341.3 1205.2,354.3 1205.8,340.3 1206.4,347.2 1207.0,340.8 1207.6,350.6 1208.2,337.5 1208.8,354.3 1209.4,335.3 1210.0,349.1 1210.6,332.5 1211.2,349.4 1211.8,343.0 1212.4,348.4 1213.0,342.4 1213.6,347.0 1214.2,339.7 1214.8,350.9 1215.4,339.5 1216.0,348.3 1216.6,340.5 1217.2,348.4 1217.8,341.0 1218.4,347.5 1219.0,341.3 1219.6,351.5 1220.2,342.4 1220.8,346.9 1221.4,335.2 1222.0,350.8 1222.6,338.5 1223.2,349.3 1223.8,341.2 1224.4,347.2 1225.0,341.5 1225.6,349.6 1226.2,334.9 1226.8,348.6 1227.4,336.7 1228.0,350.2 1228.6,339.0 1229.2,349.1 1229.8,338.6 1230.4,346.1 1231.0,341.0 1231.6,346.8 1232.2,339.6 1232.8,350.6 1233.4,337.4 1234.0,346.4 1234.6,338.0 1235.2,352.0 1235.8,338.2 1236.4,352.1 1237.0,336.4 1237.6,347.8 1238.2,339.7 1238.8,352.0 1239.4,341.1 1240.0,347.5 1240.6,338.7 1241.2,350.9 1241.8,338.8 1242.4,346.3 1243.0,339.0 1243.6,347.6 1244.2,338.8 1244.8,347.2 1245.4,340.1 1246.0,352.6 1246.6,335.6 1247.2,345.8 1247.8,335.0 1248.4,346.3 1249.0,341.8 1249.6,346.6 1250.2,339.5 1250.8,346.5 1251.4,337.9 1252.0,348.8 1252.6,341.0 1253.2,346.8 1253.8,339.8 1254.4,348.0 1255.0,337.0 1255.6,345.6 1256.2,338.5 1256.8,351.1 1257.4,339.1 1258.0,344.9 1258.6,341.7 1259.2,348.7 1259.8,335.1 1260.4,345.1 1261.0,340.4 1261.6,348.5 1262.2,336.8 1262.8,347.9 1263.4,340.7 1264.0,350.8 1264.6,336.5 1265.2,347.1 1265.8,331.9 1266.4,344.6 1267.0,339.7 1267.6,346.1 1268.2,337.3 1268.8,344.7 1269.4,333.1 1270.0,344.9 1270.6,339.6 1271.2,348.9 1271.8,339.9 1272.4,350.7 1273.0,338.5 1273.6,345.0 1274.2,332.9 1274.8,347.8 1275.4,337.8 1276.0,350.9 1276.6,339.0 1277.2,349.1 1277.8,338.9 1278.4,346.4 1279.0,340.2 1279.6,344.3 1280.2,339.9 1280.8,346.6 1281.4,333.4 1282.0,344.5 1282.6,335.5 1283.2,350.4 1283.8,339.9 1284.4,347.4 1285.0,340.1 1285.6,348.0 1286.2,339.5 1286.8,346.6 1287.4,339.4 1288.0,344.9 1288.6,338.7 1289.2,345.7 1289.8,334.5 1290.4,344.2 1291.0,337.6 1291.6,348.7 1292.2,340.4 1292.8,347.7 1293.4,339.2 1294.0,346.7 1294.6,331.9 1295.2,347.4 1295.8,336.3 1296.4,347.9 1297.0,333.6 1297.6,351.0 1298.2,338.4 1298.8,346.9 1299.4,334.8 1300.0,347.7 1300.6,337.7 1301.2,344.5 1301.8,332.1 1302.4,346.4 1303.0,338.1 1303.6,345.5 1304.2,338.2 1304.8,346.9 1305.1,346.9 1305.9,426.5 1305.9,427.0 1306.4,424.4 1306.9,421.3 1307.4,418.1 1307.9,415.8 1308.4,413.4 1308.9,410.7 1309.4,408.1 1309.9,405.6 1310.4,403.3 1310.9,402.3 1311.4,399.9 1311.9,397.0 1312.4,395.8 1312.9,394.3 1313.4,392.0 1313.9,389.7 1314.4,388.5 1315.0,386.8 1315.5,385.0 1316.0,384.0 1316.5,382.0 1317.0,381.9 1317.5,380.3 1318.0,379.2 1318.5,378.5 1319.0,377.2 1319.5,375.8 1320.0,375.0 1320.5,374.1 1321.0,373.3 1321.5,373.6 1322.0,373.2 1322.5,372.1 1323.0,372.0 1323.2,114.1 1323.6,121.8 1323.9,143.6 1324.3,174.1 1324.6,184.3 1325.0,214.9 1325.3,219.2 1325.7,244.2 1326.0,245.5 1326.4,267.9 1326.7,268.0 1327.1,283.0 1327.4,283.5 1327.8,298.5 1328.1,294.1 1328.5,310.5 1328.8,302.2 1329.2,321.4 1329.5,315.8 1329.9,323.4 1330.2,316.3 1330.6,330.2 1330.9,324.0 1331.3,338.4 1331.6,321.9 1332.0,341.5 1332.3,328.6 1332.7,338.4 1333.3,335.1 1333.9,344.9 1334.5,338.5 1335.1,345.1 1335.7,341.1 1336.3,348.4 1336.9,332.4 1337.5,351.3 1338.1,343.6 1338.7,348.8 1339.3,342.7 1339.9,349.9 1340.5,346.0 1341.1,349.7 1341.7,341.8 1342.3,357.3 1342.9,345.9 1343.5,354.8 1344.1,346.0 1344.7,357.0 1345.3,343.0 1345.9,351.2 1346.5,345.3 1347.1,355.1 1347.7,343.9 1348.3,358.5 1348.9,346.1 1349.5,353.0 1350.1,347.1 1350.7,356.3 1351.3,344.9 1351.9,353.4 1352.5,348.2 1353.1,353.7 1353.7,346.7 1354.3,356.5 1354.9,339.4 1355.5,353.9 1356.1,341.1 1356.7,361.4 1357.3,343.2 1357.9,353.9 1358.5,348.8 1359.1,353.9 1359.7,346.8 1360.3,358.1 1360.9,347.9 1361.5,358.2 1362.1,344.7 1362.2,344.7 1363.0,427.6 1363.0,427.0 1363.5,424.0 1364.0,421.4 1364.5,419.5 1365.0,416.0 1365.5,413.7 1366.0,411.9 1366.5,409.4 1367.0,406.7 1367.5,405.2 1368.0,402.7 1368.5,401.0 1369.0,398.8 1369.5,397.0 1370.0,395.2 1370.5,393.3 1371.0,391.2 1371.5,389.7 1372.0,389.0 1372.5,387.1 1373.0,385.1 1373.5,384.7 1374.0,382.6 1374.5,381.2 1375.0,380.6 1375.5,379.2 1376.0,378.4 1376.5,377.6 1377.0,376.3 1377.5,375.9 1378.0,374.6 1378.5,374.4 1379.0,373.9 1379.5,372.7 1380.0,372.6 1380.5,371.8 1381.0,372.0 1381.2,99.9 1381.6,107.7 1381.9,127.4 1382.3,161.3 1382.6,173.9 1383.0,201.6 1383.3,214.5 1383.7,233.7 1384.0,236.6 1384.4,257.3 1384.7,258.4 1385.1,281.3 1385.4,279.6 1385.8,293.6 1386.1,289.6 1386.5,305.3 1386.8,305.4 1387.2,315.7 1387.5,313.9 1387.9,322.2 1388.2,320.4 1388.6,330.8 1388.9,319.9 1389.3,331.7 1389.6,329.2 1390.0,338.5 1390.3,332.0 1390.7,342.2 1391.3,331.9 1391.9,345.4 1392.5,335.8 1393.1,348.1 1393.7,334.0 1394.3,350.3 1394.9,339.8 1395.5,353.5 1396.1,340.4 1396.7,354.4 1397.3,341.9 1397.9,356.4 1398.5,342.9 1399.1,352.4 1399.7,345.7 1400.3,360.7 1400.9,346.8 1401.5,351.5 1402.1,345.7 1402.7,351.7 1403.3,339.9 1403.9,353.2 1404.5,340.1 1405.1,357.7 1405.7,346.6 1406.3,354.3 1406.9,346.6 1407.5,346.6 1408.3,428.1 1408.3,427.0 1408.8,424.2 1409.3,420.9 1409.8,418.0 1410.3,415.5 1410.8,413.8 1411.3,410.5 1411.8,408.5 1412.3,405.9 1412.8,404.1 1413.3,401.5 1413.8,399.1 1414.3,398.0 1414.8,395.6 1415.3,393.9 1415.8,392.3 1416.3,390.7 1416.8,387.9 1417.4,386.7 1417.9,385.0 1418.4,384.0 1418.9,383.1 1419.4,381.7 1419.9,379.6 1420.4,378.7 1420.9,378.4 1421.4,377.2 1421.9,376.0 1422.4,375.3 1422.9,374.2 1423.4,374.3 1423.9,373.2 1424.4,373.2 1424.9,372.5 1425.4,372.0 1425.6,101.8 1426.0,111.5 1426.3,132.1 1426.7,161.8 1427.0,178.6 1427.4,208.0 1427.7,214.7 1428.1,233.4 1428.4,241.7 1428.8,260.9 1429.1,259.9 1429.5,278.2 1429.8,279.0 1430.2,295.0 1430.5,289.7 1430.9,304.4 1431.2,305.6 1431.6,314.3 1431.9,302.7 1432.3,324.2 1432.6,318.5 1433.0,327.3 1433.3,324.4 1433.7,334.4 1434.0,329.4 1434.4,340.1 1434.7,332.9 1435.1,343.6 1435.7,325.7 1436.3,343.4 1436.9,338.6 1437.5,344.0 1438.1,334.8 1438.7,348.6 1439.3,338.1 1439.9,352.6 1440.5,340.3 1441.1,352.8 1441.7,343.0 1442.3,351.5 1442.9,343.5 1443.5,358.1 1444.1,340.3 1444.7,352.3 1445.3,344.4 1445.9,357.4 1446.5,347.0 1447.1,355.9 1447.7,344.9 1448.3,353.9 1448.9,343.5 1449.5,352.5 1450.1,344.3 1450.7,352.8 1451.3,342.4 1451.9,363.1 1452.5,344.2 1453.1,352.1 1453.7,348.6 1454.3,355.1 1454.9,347.4 1455.5,353.9 1456.1,339.9 1456.7,352.5 1456.9,352.5 1457.7,427.1 1457.7,427.0 1458.2,424.1 1458.7,421.6 1459.2,418.6 1459.7,415.9 1460.2,413.2 1460.8,411.1 1461.3,408.7 1461.8,406.9 1462.3,404.5 1462.8,402.8 1463.3,400.0 1463.8,398.7 1464.3,396.4 1464.8,393.9 1465.3,392.3 1465.8,391.0 1466.3,389.9 1466.9,387.6 1467.4,386.6 1467.9,384.7 1468.4,383.9 1468.9,381.6 1469.4,380.9 1469.9,380.3 1470.4,378.5 1470.9,377.4 1471.4,376.2 1471.9,375.6 1472.4,374.9 1473.0,374.7 1473.5,373.5 1474.0,373.1 1474.5,372.4 1475.0,372.5 1475.5,372.0 1475.7,110.6 1476.1,120.1 1476.4,139.0 1476.8,169.0 1477.1,181.2 1477.5,210.8 1477.8,219.2 1478.2,242.8 1478.5,243.8 1478.9,263.4 1479.2,265.4 1479.6,281.4 1479.9,282.2 1480.3,303.2 1480.6,295.2 1481.0,312.2 1481.3,299.6 1481.7,315.6 1482.0,311.5 1482.4,321.8 1482.7,315.2 1483.1,333.0 1483.4,322.9 1483.8,332.6 1484.1,329.3 1484.5,336.5 1484.8,333.1 1485.2,340.9 1485.8,334.1 1486.4,347.7 1487.0,339.8 1487.6,344.3 1488.2,337.1 1488.8,356.1 1489.4,342.7 1490.0,358.8 1490.6,339.4 1491.2,353.9 1491.8,343.3 1492.4,349.4 1493.0,342.1 1493.6,351.5 1494.2,345.1 1494.8,354.6 1495.4,341.0 1496.0,357.2 1496.2,357.2 1497.0,427.1 1497.0,427.0 1497.5,424.3 1498.0,421.6 1498.5,418.9 1499.0,416.4 1499.5,413.9 1500.1,411.1 1500.6,409.2 1501.1,406.4 1501.6,404.7 1502.1,402.6 1502.6,400.6 1503.1,398.0 1503.6,396.6 1504.1,395.0 1504.6,392.6 1505.1,390.7 1505.6,389.3 1506.2,388.3 1506.7,385.8 1507.2,384.2 1507.7,383.4 1508.2,382.3 1508.7,381.3 1509.2,379.6 1509.7,379.3 1510.2,377.4 1510.7,377.1 1511.2,375.5 1511.7,374.6 1512.3,374.0 1512.8,373.3 1513.3,373.3 1513.8,372.8 1514.3,372.0 1514.8,372.0 1515.0,116.6 1515.4,126.2 1515.7,144.9 1516.1,173.2 1516.4,189.0 1516.8,211.8 1517.1,222.9 1517.5,248.0 1517.8,249.1 1518.2,263.9 1518.5,269.5 1518.9,284.4 1519.2,280.8 1519.6,296.2 1519.9,295.8 1520.3,309.9 1520.6,306.8 1521.0,320.2 1521.3,311.8 1521.7,331.1 1522.0,316.6 1522.4,332.4 1522.7,321.2 1523.1,334.8 1523.4,323.6 1523.8,340.8 1524.1,328.6 1524.5,340.5 1525.1,328.7 1525.7,347.2 1526.3,334.2 1526.9,346.4 1527.5,341.6 1528.1,349.3 1528.7,343.2 1529.3,352.0 1529.9,344.3 1530.5,351.1 1531.1,345.1 1531.7,355.2 1532.3,341.8 1532.9,361.1 1533.5,345.4 1534.1,355.5 1534.7,342.0 1535.3,357.7 1535.9,344.9 1536.5,353.1 1537.1,347.6 1537.7,359.2 1538.3,347.1 1538.9,355.0 1539.5,338.7 1540.1,352.1 1540.7,344.7 1541.3,357.2 1541.9,344.5 1542.5,354.5 1543.1,340.5 1543.7,356.2 1544.3,346.5 1544.9,361.0 1545.5,344.0 1546.1,358.1 1546.7,347.2 1547.3,354.3 1547.9,339.6 1548.5,363.3 1549.1,349.0 1549.7,353.3 1550.3,340.1 1550.9,360.3 1551.5,339.6 1552.1,353.1 1552.7,345.3 1553.3,358.6 1553.9,347.4 1554.5,354.3 1555.1,348.9 1555.7,354.6 1556.3,344.4 1556.9,361.4 1557.5,347.9 1558.1,362.0 1558.7,348.8 1559.3,353.1 1559.9,349.2 1560.5,360.9 1561.1,349.5 1561.7,354.2 1562.3,346.8 1562.9,353.2 1563.5,348.2 1564.1,354.0 1564.3,354.0 1565.1,426.0 1565.1,427.0 1565.6,424.9 1566.1,421.6 1566.6,419.7 1567.1,416.4 1567.6,414.4 1568.1,411.7 1568.6,409.8 1569.1,407.3 1569.6,405.7 1570.2,403.0 1570.7,401.7 1571.2,399.5 1571.7,397.2 1572.2,395.7 1572.7,394.1 1573.2,392.9 1573.7,390.6 1574.2,388.9 1574.7,388.3 1575.2,386.8 1575.7,385.3 1576.2,383.4 1576.7,382.1 1577.2,381.0 1577.7,379.7 1578.2,378.6 1578.7,378.2 1579.3,377.2 1579.8,376.5 1580.3,375.5 1580.8,374.4 1581.3,374.5 1581.8,373.9 1582.3,373.2 1582.8,372.8 1583.3,372.6 1583.8,372.0 1584.0,103.0 1584.4,115.4 1584.7,134.8 1585.1,162.1 1585.4,177.7 1585.8,203.3 1586.1,212.9 1586.5,236.9 1586.8,243.3 1587.2,261.1 1587.5,262.8 1587.9,286.9 1588.2,271.0 1588.6,298.7 1588.9,295.6 1589.3,307.5 1589.6,304.8 1590.0,317.0 1590.3,311.7 1590.7,321.1 1591.0,318.0 1591.4,333.2 1591.7,320.4 1592.1,333.4 1592.4,320.6 1592.8,341.5 1593.1,331.3 1593.5,340.7 1594.1,331.0 1594.7,345.2 1595.3,338.7 1595.9,344.2" fill="none" stroke="#0ea8cf" stroke-width="1.4" stroke-linejoin="round"/>

  <!-- minimap -->
  <path d="M79,597 L79.0,595.0 L79.5,595.0 L80.0,595.0 L80.5,595.0 L81.0,595.0 L81.5,595.0 L82.0,595.0 L82.5,595.0 L83.0,595.0 L83.5,595.0 L84.0,595.0 L84.5,595.0 L85.0,595.0 L85.5,595.0 L86.0,595.0 L86.5,595.0 L87.0,595.0 L87.5,595.0 L88.0,595.0 L88.5,595.0 L89.0,595.0 L89.5,595.0 L90.0,595.0 L90.5,595.0 L91.0,595.0 L91.5,595.0 L92.0,595.0 L92.5,595.0 L93.0,595.0 L93.5,595.0 L94.0,595.0 L94.5,595.0 L95.0,595.0 L95.5,595.0 L96.0,595.0 L96.5,595.0 L97.0,595.0 L97.5,595.0 L98.0,595.0 L98.5,595.0 L99.0,595.0 L99.5,595.0 L100.0,595.0 L100.5,595.0 L101.0,595.0 L101.5,595.0 L102.0,595.0 L102.5,595.0 L103.0,595.0 L103.5,595.0 L104.0,595.0 L104.5,595.0 L105.0,595.0 L105.5,595.0 L106.0,595.0 L106.5,595.0 L107.0,595.0 L107.5,595.0 L108.0,595.0 L108.5,595.0 L109.0,595.0 L109.5,595.0 L110.0,595.0 L110.5,595.0 L111.0,595.0 L111.5,595.0 L112.0,595.0 L112.5,595.0 L113.0,595.0 L113.5,595.0 L114.0,595.0 L114.5,595.0 L115.0,595.0 L115.5,595.0 L116.0,595.0 L116.5,595.0 L117.0,595.0 L117.5,595.0 L118.0,595.0 L118.5,595.0 L119.0,595.0 L119.5,595.0 L120.0,595.0 L120.5,595.0 L121.0,595.0 L121.5,595.0 L122.0,595.0 L122.5,595.0 L123.0,595.0 L123.5,595.0 L124.0,595.0 L124.5,595.0 L125.0,595.0 L125.5,595.0 L126.0,595.0 L126.5,595.0 L127.0,595.0 L127.5,595.0 L128.0,595.0 L128.5,595.0 L129.0,595.0 L129.5,595.0 L130.0,595.0 L130.5,595.0 L131.0,595.0 L131.5,595.0 L132.0,595.0 L132.5,595.0 L133.0,595.0 L133.5,595.0 L134.0,595.0 L134.5,595.0 L135.0,595.0 L135.5,595.0 L136.0,595.0 L136.5,595.0 L137.0,595.0 L137.5,595.0 L138.0,595.0 L138.5,595.0 L139.0,595.0 L139.5,595.0 L140.0,595.0 L140.5,595.0 L141.0,595.0 L141.5,595.0 L142.0,595.0 L142.5,595.0 L143.0,595.0 L143.5,595.0 L144.0,595.0 L144.5,595.0 L145.0,595.0 L145.5,595.0 L146.0,595.0 L146.5,595.0 L147.0,595.0 L147.5,595.0 L148.0,538.0 L148.5,538.0 L149.0,538.0 L149.5,538.0 L150.0,538.0 L150.5,538.0 L151.0,594.9 L151.5,594.3 L152.0,594.9 L152.5,594.8 L153.0,594.3 L153.5,594.5 L154.0,593.9 L154.5,594.9 L155.0,594.6 L155.5,593.9 L156.0,594.5 L156.5,594.9 L157.0,594.5 L157.5,594.0 L158.0,594.7 L158.5,594.9 L159.0,594.2 L159.5,594.5 L160.0,594.4 L160.5,595.0 L161.0,594.7 L161.5,594.9 L162.0,594.7 L162.5,595.0 L163.0,594.9 L163.5,594.7 L164.0,594.6 L164.5,594.8 L165.0,594.9 L165.5,594.0 L166.0,594.4 L166.5,594.6 L167.0,594.8 L167.5,594.8 L168.0,594.5 L168.5,594.7 L169.0,594.5 L169.5,594.3 L170.0,594.9 L170.5,594.7 L171.0,594.6 L171.5,594.2 L172.0,594.8 L172.5,594.6 L173.0,594.4 L173.5,594.5 L174.0,594.4 L174.5,594.7 L175.0,594.9 L175.5,595.0 L176.0,594.6 L176.5,595.0 L177.0,594.1 L177.5,594.2 L178.0,594.4 L178.5,594.5 L179.0,594.5 L179.5,595.0 L180.0,594.9 L180.5,594.2 L181.0,594.8 L181.5,595.0 L182.0,594.8 L182.5,594.7 L183.0,595.0 L183.5,595.0 L184.0,595.0 L184.5,595.0 L185.0,594.6 L185.5,594.6 L186.0,593.6 L186.5,594.8 L187.0,595.0 L187.5,593.8 L188.0,594.5 L188.5,594.7 L189.0,594.6 L189.5,594.6 L190.0,594.9 L190.5,594.5 L191.0,594.7 L191.5,595.0 L192.0,594.8 L192.5,594.7 L193.0,594.9 L193.5,594.4 L194.0,594.6 L194.5,594.9 L195.0,594.6 L195.5,594.8 L196.0,594.2 L196.5,594.7 L197.0,594.5 L197.5,594.6 L198.0,593.9 L198.5,594.8 L199.0,594.9 L199.5,594.6 L200.0,594.4 L200.5,594.4 L201.0,594.5 L201.5,594.9 L202.0,594.1 L202.5,594.9 L203.0,594.8 L203.5,594.7 L204.0,594.8 L204.5,594.8 L205.0,594.1 L205.5,594.9 L206.0,594.6 L206.5,594.4 L207.0,594.6 L207.5,594.7 L208.0,594.9 L208.5,594.8 L209.0,594.4 L209.5,594.4 L210.0,594.6 L210.5,595.0 L211.0,594.6 L211.5,594.5 L212.0,594.7 L212.5,595.0 L213.0,594.9 L213.5,594.9 L214.0,594.7 L214.5,594.8 L215.0,594.3 L215.5,594.8 L216.0,594.4 L216.5,594.7 L217.0,594.8 L217.5,594.7 L218.0,594.3 L218.5,595.0 L219.0,594.7 L219.5,594.9 L220.0,594.2 L220.5,594.6 L221.0,594.3 L221.5,594.1 L222.0,594.8 L222.5,594.8 L223.0,594.6 L223.5,595.0 L224.0,594.8 L224.5,594.8 L225.0,594.9 L225.5,594.4 L226.0,594.8 L226.5,594.3 L227.0,594.1 L227.5,594.6 L228.0,594.6 L228.5,594.9 L229.0,594.8 L229.5,594.4 L230.0,595.0 L230.5,594.5 L231.0,594.4 L231.5,594.2 L232.0,594.8 L232.5,594.9 L233.0,594.9 L233.5,594.6 L234.0,594.6 L234.5,595.0 L235.0,594.3 L235.5,594.9 L236.0,594.6 L236.5,594.2 L237.0,594.9 L237.5,594.9 L238.0,594.5 L238.5,593.9 L239.0,594.6 L239.5,594.4 L240.0,594.7 L240.5,594.6 L241.0,594.7 L241.5,594.7 L242.0,594.7 L242.5,593.6 L243.0,594.7 L243.5,594.8 L244.0,594.9 L244.5,594.3 L245.0,594.9 L245.5,594.9 L246.0,594.8 L246.5,595.0 L247.0,594.1 L247.5,594.8 L248.0,594.9 L248.5,594.8 L249.0,594.9 L249.5,594.8 L250.0,595.0 L250.5,594.8 L251.0,594.2 L251.5,594.8 L252.0,594.8 L252.5,594.7 L253.0,594.9 L253.5,594.1 L254.0,594.8 L254.5,594.8 L255.0,594.7 L255.5,595.0 L256.0,594.5 L256.5,594.9 L257.0,594.8 L257.5,594.9 L258.0,593.7 L258.5,594.7 L259.0,594.7 L259.5,594.9 L260.0,593.9 L260.5,594.5 L261.0,594.7 L261.5,594.3 L262.0,594.8 L262.5,594.9 L263.0,594.5 L263.5,594.8 L264.0,594.2 L264.5,594.8 L265.0,594.8 L265.5,594.8 L266.0,594.9 L266.5,594.8 L267.0,594.6 L267.5,595.0 L268.0,594.6 L268.5,593.5 L269.0,594.7 L269.5,594.4 L270.0,594.2 L270.5,594.9 L271.0,594.7 L271.5,595.0 L272.0,594.5 L272.5,594.8 L273.0,594.5 L273.5,594.6 L274.0,594.1 L274.5,594.9 L275.0,595.0 L275.5,594.9 L276.0,594.3 L276.5,594.0 L277.0,594.3 L277.5,594.5 L278.0,594.1 L278.5,594.8 L279.0,594.6 L279.5,594.7 L280.0,594.6 L280.5,594.7 L281.0,594.6 L281.5,594.7 L282.0,594.8 L282.5,594.6 L283.0,594.7 L283.5,594.3 L284.0,594.2 L284.5,595.0 L285.0,594.6 L285.5,594.2 L286.0,594.6 L286.5,594.2 L287.0,595.0 L287.5,595.0 L288.0,594.1 L288.5,595.0 L289.0,594.3 L289.5,594.3 L290.0,594.3 L290.5,594.6 L291.0,594.5 L291.5,594.5 L292.0,594.2 L292.5,594.5 L293.0,594.2 L293.5,594.4 L294.0,594.2 L294.5,594.2 L295.0,594.1 L295.5,595.0 L296.0,594.2 L296.5,594.9 L297.0,594.9 L297.5,594.6 L298.0,594.5 L298.5,594.6 L299.0,594.9 L299.5,594.8 L300.0,594.1 L300.5,594.8 L301.0,594.7 L301.5,594.8 L302.0,594.7 L302.5,594.6 L303.0,594.7 L303.5,594.1 L304.0,594.9 L304.5,595.0 L305.0,594.8 L305.5,594.3 L306.0,594.7 L306.5,594.8 L307.0,594.5 L307.5,594.3 L308.0,594.5 L308.5,594.6 L309.0,594.9 L309.5,594.3 L310.0,594.2 L310.5,593.9 L311.0,594.8 L311.5,595.0 L312.0,594.6 L312.5,594.5 L313.0,594.5 L313.5,594.5 L314.0,594.6 L314.5,594.7 L315.0,594.5 L315.5,594.5 L316.0,594.9 L316.5,594.5 L317.0,594.5 L317.5,594.9 L318.0,594.5 L318.5,594.2 L319.0,594.0 L319.5,594.9 L320.0,594.8 L320.5,594.9 L321.0,594.9 L321.5,594.6 L322.0,594.7 L322.5,594.9 L323.0,594.5 L323.5,594.5 L324.0,594.7 L324.5,594.6 L325.0,594.2 L325.5,594.8 L326.0,594.7 L326.5,595.0 L327.0,594.1 L327.5,594.8 L328.0,594.0 L328.5,594.5 L329.0,595.0 L329.5,594.4 L330.0,594.5 L330.5,594.7 L331.0,594.9 L331.5,594.9 L332.0,594.6 L332.5,595.0 L333.0,594.7 L333.5,594.4 L334.0,594.8 L334.5,594.9 L335.0,594.8 L335.5,592.8 L336.0,594.4 L336.5,594.2 L337.0,594.7 L337.5,594.6 L338.0,594.0 L338.5,594.2 L339.0,594.7 L339.5,594.7 L340.0,594.7 L340.5,594.7 L341.0,594.8 L341.5,594.4 L342.0,594.9 L342.5,594.1 L343.0,594.4 L343.5,594.4 L344.0,594.8 L344.5,594.4 L345.0,594.7 L345.5,594.6 L346.0,594.4 L346.5,594.8 L347.0,594.5 L347.5,594.7 L348.0,594.8 L348.5,594.9 L349.0,594.5 L349.5,594.4 L350.0,595.0 L350.5,595.0 L351.0,595.0 L351.5,594.6 L352.0,594.3 L352.5,595.0 L353.0,594.6 L353.5,595.0 L354.0,594.4 L354.5,594.7 L355.0,594.4 L355.5,594.7 L356.0,594.8 L356.5,594.3 L357.0,594.6 L357.5,595.0 L358.0,594.2 L358.5,594.9 L359.0,594.6 L359.5,594.4 L360.0,594.0 L360.5,593.9 L361.0,594.6 L361.5,594.8 L362.0,594.9 L362.5,594.2 L363.0,594.6 L363.5,594.9 L364.0,594.8 L364.5,594.3 L365.0,594.8 L365.5,594.5 L366.0,595.0 L366.5,595.0 L367.0,594.6 L367.5,594.9 L368.0,594.7 L368.5,594.4 L369.0,594.6 L369.5,594.9 L370.0,594.7 L370.5,595.0 L371.0,594.8 L371.5,594.8 L372.0,594.6 L372.5,594.7 L373.0,595.0 L373.5,594.5 L374.0,594.9 L374.5,594.4 L375.0,594.9 L375.5,594.5 L376.0,594.8 L376.5,594.8 L377.0,594.4 L377.5,594.8 L378.0,594.8 L378.5,594.3 L379.0,594.7 L379.5,594.5 L380.0,594.9 L380.5,594.7 L381.0,594.6 L381.5,594.5 L382.0,594.4 L382.5,594.8 L383.0,594.8 L383.5,594.6 L384.0,594.5 L384.5,594.0 L385.0,595.0 L385.5,594.9 L386.0,594.5 L386.5,594.2 L387.0,594.2 L387.5,594.6 L388.0,594.7 L388.5,594.8 L389.0,594.4 L389.5,594.6 L390.0,594.3 L390.5,594.7 L391.0,594.9 L391.5,594.4 L392.0,594.3 L392.5,594.8 L393.0,594.4 L393.5,594.8 L394.0,594.6 L394.5,594.4 L395.0,594.8 L395.5,594.7 L396.0,594.8 L396.5,594.2 L397.0,594.3 L397.5,595.0 L398.0,594.9 L398.5,594.7 L399.0,594.5 L399.5,594.5 L400.0,595.0 L400.5,594.6 L401.0,594.7 L401.5,593.9 L402.0,594.8 L402.5,594.6 L403.0,594.6 L403.5,594.8 L404.0,594.6 L404.5,594.3 L405.0,594.4 L405.5,595.0 L406.0,594.5 L406.5,594.6 L407.0,594.7 L407.5,594.5 L408.0,594.7 L408.5,594.9 L409.0,594.6 L409.5,594.9 L410.0,594.7 L410.5,595.0 L411.0,594.9 L411.5,594.9 L412.0,594.8 L412.5,594.9 L413.0,594.7 L413.5,595.0 L414.0,594.8 L414.5,594.9 L415.0,594.2 L415.5,594.8 L416.0,593.9 L416.5,594.4 L417.0,594.8 L417.5,594.8 L418.0,594.9 L418.5,594.5 L419.0,594.8 L419.5,594.7 L420.0,594.2 L420.5,594.7 L421.0,594.6 L421.5,594.2 L422.0,594.4 L422.5,595.0 L423.0,594.3 L423.5,594.9 L424.0,595.0 L424.5,594.8 L425.0,594.9 L425.5,594.2 L426.0,594.9 L426.5,594.8 L427.0,594.8 L427.5,594.8 L428.0,594.7 L428.5,594.4 L429.0,594.5 L429.5,594.5 L430.0,594.9 L430.5,594.5 L431.0,594.9 L431.5,594.7 L432.0,594.8 L432.5,594.9 L433.0,593.7 L433.5,594.2 L434.0,595.0 L434.5,594.9 L435.0,594.7 L435.5,594.7 L436.0,594.6 L436.5,595.0 L437.0,594.8 L437.5,594.3 L438.0,594.9 L438.5,594.5 L439.0,594.9 L439.5,594.8 L440.0,594.4 L440.5,594.0 L441.0,594.7 L441.5,594.6 L442.0,594.7 L442.5,594.0 L443.0,594.3 L443.5,594.3 L444.0,594.1 L444.5,594.7 L445.0,594.9 L445.5,594.8 L446.0,594.6 L446.5,595.0 L447.0,595.0 L447.5,594.7 L448.0,594.2 L448.5,594.9 L449.0,595.0 L449.5,594.8 L450.0,594.5 L450.5,594.7 L451.0,594.4 L451.5,594.9 L452.0,594.5 L452.5,593.8 L453.0,594.7 L453.5,594.4 L454.0,594.7 L454.5,594.8 L455.0,594.6 L455.5,594.9 L456.0,593.9 L456.5,594.8 L457.0,594.1 L457.5,594.3 L458.0,593.6 L458.5,594.8 L459.0,594.6 L459.5,595.0 L460.0,594.6 L460.5,594.8 L461.0,594.8 L461.5,594.6 L462.0,594.5 L462.5,594.8 L463.0,593.9 L463.5,594.0 L464.0,594.4 L464.5,595.0 L465.0,594.7 L465.5,595.0 L466.0,594.3 L466.5,594.4 L467.0,594.6 L467.5,594.0 L468.0,594.5 L468.5,594.3 L469.0,594.5 L469.5,594.7 L470.0,594.8 L470.5,594.2 L471.0,594.3 L471.5,594.2 L472.0,594.7 L472.5,595.0 L473.0,594.2 L473.5,594.9 L474.0,594.8 L474.5,594.2 L475.0,595.0 L475.5,594.8 L476.0,594.3 L476.5,594.9 L477.0,594.5 L477.5,594.0 L478.0,594.4 L478.5,594.5 L479.0,595.0 L479.5,594.2 L480.0,594.6 L480.5,595.0 L481.0,594.4 L481.5,594.7 L482.0,594.6 L482.5,594.5 L483.0,594.8 L483.5,594.4 L484.0,594.4 L484.5,594.5 L485.0,594.4 L485.5,593.6 L486.0,594.5 L486.5,594.2 L487.0,594.8 L487.5,594.5 L488.0,594.5 L488.5,594.7 L489.0,594.7 L489.5,594.9 L490.0,594.9 L490.5,594.8 L491.0,595.0 L491.5,594.4 L492.0,594.1 L492.5,594.5 L493.0,594.9 L493.5,594.2 L494.0,594.8 L494.5,594.9 L495.0,594.5 L495.5,594.7 L496.0,594.9 L496.5,594.4 L497.0,594.3 L497.5,594.8 L498.0,594.8 L498.5,594.5 L499.0,595.0 L499.5,594.4 L500.0,594.0 L500.5,594.1 L501.0,594.9 L501.5,595.0 L502.0,593.9 L502.5,594.8 L503.0,593.9 L503.5,594.0 L504.0,594.1 L504.5,594.9 L505.0,594.3 L505.5,594.0 L506.0,594.8 L506.5,594.8 L507.0,594.9 L507.5,594.2 L508.0,594.5 L508.5,594.7 L509.0,594.2 L509.5,594.9 L510.0,594.4 L510.5,594.4 L511.0,593.9 L511.5,594.7 L512.0,594.9 L512.5,594.7 L513.0,594.4 L513.5,594.7 L514.0,594.8 L514.5,594.6 L515.0,594.6 L515.5,594.6 L516.0,595.0 L516.5,594.6 L517.0,594.5 L517.5,595.0 L518.0,594.3 L518.5,594.5 L519.0,594.1 L519.5,594.1 L520.0,594.1 L520.5,594.7 L521.0,595.0 L521.5,593.9 L522.0,594.4 L522.5,594.5 L523.0,594.6 L523.5,595.0 L524.0,594.9 L524.5,594.9 L525.0,594.8 L525.5,594.8 L526.0,594.3 L526.5,593.9 L527.0,594.5 L527.5,594.8 L528.0,594.6 L528.5,594.3 L529.0,594.8 L529.5,594.0 L530.0,594.7 L530.5,594.8 L531.0,594.6 L531.5,594.7 L532.0,594.7 L532.5,594.6 L533.0,594.9 L533.5,594.8 L534.0,595.0 L534.5,594.4 L535.0,595.0 L535.5,594.8 L536.0,594.4 L536.5,594.3 L537.0,594.4 L537.5,594.6 L538.0,594.3 L538.5,593.6 L539.0,594.3 L539.5,594.7 L540.0,594.3 L540.5,594.8 L541.0,595.0 L541.5,593.8 L542.0,594.4 L542.5,594.8 L543.0,594.4 L543.5,594.5 L544.0,595.0 L544.5,594.5 L545.0,594.6 L545.5,595.0 L546.0,594.9 L546.5,594.9 L547.0,594.7 L547.5,594.9 L548.0,594.8 L548.5,594.6 L549.0,594.8 L549.5,594.6 L550.0,594.6 L550.5,594.4 L551.0,593.8 L551.5,594.4 L552.0,594.6 L552.5,594.1 L553.0,594.6 L553.5,594.8 L554.0,595.0 L554.5,595.0 L555.0,594.6 L555.5,594.7 L556.0,594.6 L556.5,594.3 L557.0,593.9 L557.5,593.4 L558.0,594.9 L558.5,594.5 L559.0,594.5 L559.5,594.6 L560.0,594.3 L560.5,594.6 L561.0,594.9 L561.5,594.7 L562.0,594.8 L562.5,594.8 L563.0,594.8 L563.5,594.6 L564.0,594.5 L564.5,594.9 L565.0,594.7 L565.5,594.3 L566.0,595.0 L566.5,594.5 L567.0,594.8 L567.5,594.9 L568.0,595.0 L568.5,594.5 L569.0,594.8 L569.5,594.9 L570.0,594.2 L570.5,595.0 L571.0,594.1 L571.5,595.0 L572.0,594.8 L572.5,594.5 L573.0,594.9 L573.5,594.6 L574.0,594.3 L574.5,594.9 L575.0,594.3 L575.5,594.7 L576.0,594.5 L576.5,593.9 L577.0,595.0 L577.5,594.7 L578.0,594.8 L578.5,594.8 L579.0,594.9 L579.5,594.9 L580.0,594.8 L580.5,594.7 L581.0,594.6 L581.5,594.8 L582.0,594.4 L582.5,594.7 L583.0,594.9 L583.5,594.8 L584.0,594.6 L584.5,594.5 L585.0,594.0 L585.5,594.9 L586.0,594.5 L586.5,594.9 L587.0,594.9 L587.5,594.3 L588.0,594.3 L588.5,594.8 L589.0,594.8 L589.5,594.9 L590.0,594.9 L590.5,594.5 L591.0,595.0 L591.5,594.3 L592.0,594.5 L592.5,594.9 L593.0,594.4 L593.5,594.6 L594.0,594.4 L594.5,594.3 L595.0,594.7 L595.5,594.1 L596.0,594.4 L596.5,594.6 L597.0,595.0 L597.5,594.7 L598.0,594.8 L598.5,594.4 L599.0,594.6 L599.5,594.5 L600.0,595.0 L600.5,594.9 L601.0,594.3 L601.5,594.9 L602.0,594.5 L602.5,594.8 L603.0,594.5 L603.5,594.9 L604.0,594.8 L604.5,593.5 L605.0,594.6 L605.5,594.8 L606.0,594.9 L606.5,594.4 L607.0,595.0 L607.5,594.7 L608.0,594.3 L608.5,594.1 L609.0,595.0 L609.5,594.7 L610.0,593.9 L610.5,594.8 L611.0,594.5 L611.5,594.6 L612.0,594.6 L612.5,594.5 L613.0,594.5 L613.5,594.8 L614.0,594.4 L614.5,594.8 L615.0,595.0 L615.5,594.8 L616.0,594.1 L616.5,594.7 L617.0,594.7 L617.5,594.4 L618.0,594.8 L618.5,594.9 L619.0,594.5 L619.5,594.8 L620.0,594.5 L620.5,594.9 L621.0,594.6 L621.5,594.5 L622.0,594.9 L622.5,594.8 L623.0,595.0 L623.5,594.9 L624.0,594.0 L624.5,594.8 L625.0,594.8 L625.5,594.4 L626.0,594.4 L626.5,594.6 L627.0,594.7 L627.5,595.0 L628.0,595.0 L628.5,594.5 L629.0,594.9 L629.5,593.8 L630.0,593.8 L630.5,594.5 L631.0,594.0 L631.5,594.8 L632.0,594.0 L632.5,593.9 L633.0,594.3 L633.5,594.2 L634.0,594.0 L634.5,594.7 L635.0,594.9 L635.5,594.4 L636.0,594.9 L636.5,594.7 L637.0,594.6 L637.5,594.3 L638.0,595.0 L638.5,594.9 L639.0,594.6 L639.5,594.4 L640.0,595.0 L640.5,594.4 L641.0,594.6 L641.5,594.8 L642.0,594.4 L642.5,594.9 L643.0,594.2 L643.5,594.7 L644.0,594.2 L644.5,594.6 L645.0,595.0 L645.5,594.5 L646.0,594.7 L646.5,594.7 L647.0,594.7 L647.5,594.4 L648.0,594.5 L648.5,594.8 L649.0,594.5 L649.5,595.0 L650.0,594.7 L650.5,594.6 L651.0,594.9 L651.5,594.8 L652.0,594.6 L652.5,595.0 L653.0,594.2 L653.5,594.9 L654.0,594.6 L654.5,594.8 L655.0,594.3 L655.5,594.7 L656.0,594.4 L656.5,594.9 L657.0,594.6 L657.5,594.6 L658.0,594.8 L658.5,593.7 L659.0,594.7 L659.5,594.3 L660.0,594.9 L660.5,594.1 L661.0,594.8 L661.5,594.9 L662.0,594.6 L662.5,594.3 L663.0,594.4 L663.5,595.0 L664.0,594.4 L664.5,594.7 L665.0,594.7 L665.5,594.2 L666.0,594.9 L666.5,594.2 L667.0,594.4 L667.5,594.6 L668.0,594.6 L668.5,594.6 L669.0,594.8 L669.5,594.7 L670.0,594.9 L670.5,594.8 L671.0,594.7 L671.5,594.1 L672.0,594.5 L672.5,594.5 L673.0,594.1 L673.5,594.6 L674.0,594.7 L674.5,594.7 L675.0,594.2 L675.5,594.8 L676.0,594.8 L676.5,594.6 L677.0,594.7 L677.5,594.5 L678.0,594.6 L678.5,595.0 L679.0,594.9 L679.5,594.6 L680.0,594.7 L680.5,594.5 L681.0,595.0 L681.5,595.0 L682.0,594.6 L682.5,594.7 L683.0,594.4 L683.5,595.0 L684.0,594.9 L684.5,594.7 L685.0,594.4 L685.5,594.9 L686.0,594.7 L686.5,594.3 L687.0,594.1 L687.5,594.9 L688.0,594.3 L688.5,594.6 L689.0,594.8 L689.5,594.6 L690.0,594.9 L690.5,594.6 L691.0,594.5 L691.5,594.7 L692.0,595.0 L692.5,594.9 L693.0,594.6 L693.5,594.6 L694.0,594.8 L694.5,594.8 L695.0,594.9 L695.5,594.6 L696.0,595.0 L696.5,594.8 L697.0,594.7 L697.5,594.6 L698.0,594.7 L698.5,594.1 L699.0,594.8 L699.5,594.9 L700.0,594.6 L700.5,594.9 L701.0,594.4 L701.5,594.8 L702.0,595.0 L702.5,594.7 L703.0,594.8 L703.5,594.4 L704.0,594.4 L704.5,594.7 L705.0,594.5 L705.5,594.3 L706.0,594.4 L706.5,594.7 L707.0,594.8 L707.5,595.0 L708.0,594.5 L708.5,594.8 L709.0,595.0 L709.5,594.7 L710.0,594.9 L710.5,594.8 L711.0,595.0 L711.5,594.6 L712.0,594.7 L712.5,594.5 L713.0,594.8 L713.5,594.8 L714.0,594.2 L714.5,593.6 L715.0,594.9 L715.5,594.7 L716.0,594.5 L716.5,594.5 L717.0,595.0 L717.5,594.8 L718.0,594.7 L718.5,594.7 L719.0,594.7 L719.5,594.6 L720.0,594.4 L720.5,594.6 L721.0,594.8 L721.5,593.9 L722.0,594.4 L722.5,594.8 L723.0,594.8 L723.5,594.7 L724.0,594.5 L724.5,594.8 L725.0,594.6 L725.5,594.7 L726.0,594.6 L726.5,593.9 L727.0,594.4 L727.5,594.7 L728.0,594.6 L728.5,594.6 L729.0,594.4 L729.5,594.7 L730.0,594.5 L730.5,594.7 L731.0,594.8 L731.5,594.9 L732.0,594.5 L732.5,594.8 L733.0,594.6 L733.5,595.0 L734.0,594.9 L734.5,594.8 L735.0,593.8 L735.5,594.7 L736.0,594.3 L736.5,594.4 L737.0,595.0 L737.5,594.9 L738.0,594.7 L738.5,594.5 L739.0,594.4 L739.5,595.0 L740.0,594.3 L740.5,594.5 L741.0,594.5 L741.5,594.7 L742.0,594.5 L742.5,594.8 L743.0,594.4 L743.5,594.6 L744.0,594.6 L744.5,594.8 L745.0,594.8 L745.5,594.7 L746.0,594.3 L746.5,594.3 L747.0,594.8 L747.5,594.9 L748.0,594.4 L748.5,594.9 L749.0,594.5 L749.5,594.7 L750.0,594.4 L750.5,595.0 L751.0,594.5 L751.5,593.7 L752.0,594.6 L752.5,594.7 L753.0,594.3 L753.5,594.5 L754.0,594.6 L754.5,593.9 L755.0,594.8 L755.5,594.2 L756.0,594.9 L756.5,594.9 L757.0,594.0 L757.5,594.6 L758.0,594.2 L758.5,594.9 L759.0,595.0 L759.5,594.6 L760.0,594.7 L760.5,594.6 L761.0,594.3 L761.5,594.0 L762.0,594.8 L762.5,594.7 L763.0,594.0 L763.5,594.9 L764.0,594.9 L764.5,594.9 L765.0,594.8 L765.5,594.4 L766.0,594.7 L766.5,594.8 L767.0,594.8 L767.5,594.9 L768.0,594.6 L768.5,594.0 L769.0,594.5 L769.5,594.0 L770.0,593.9 L770.5,594.2 L771.0,594.7 L771.5,594.8 L772.0,593.9 L772.5,594.7 L773.0,594.2 L773.5,595.0 L774.0,594.8 L774.5,594.4 L775.0,594.7 L775.5,594.2 L776.0,594.4 L776.5,594.5 L777.0,594.4 L777.5,594.1 L778.0,594.8 L778.5,594.7 L779.0,594.9 L779.5,594.6 L780.0,594.9 L780.5,595.0 L781.0,594.1 L781.5,595.0 L782.0,594.2 L782.5,594.7 L783.0,594.8 L783.5,594.7 L784.0,593.8 L784.5,594.6 L785.0,594.6 L785.5,594.9 L786.0,595.0 L786.5,595.0 L787.0,594.2 L787.5,594.7 L788.0,594.7 L788.5,594.9 L789.0,594.6 L789.5,594.9 L790.0,594.3 L790.5,594.5 L791.0,594.7 L791.5,594.4 L792.0,594.1 L792.5,594.4 L793.0,594.9 L793.5,594.9 L794.0,594.7 L794.5,594.9 L795.0,594.5 L795.5,594.9 L796.0,594.8 L796.5,594.9 L797.0,594.3 L797.5,594.5 L798.0,594.9 L798.5,594.7 L799.0,594.8 L799.5,595.0 L800.0,595.0 L800.5,594.9 L801.0,594.6 L801.5,594.7 L802.0,594.4 L802.5,594.4 L803.0,594.6 L803.5,594.4 L804.0,594.4 L804.5,594.7 L805.0,594.0 L805.5,594.8 L806.0,594.3 L806.5,594.8 L807.0,594.5 L807.5,594.4 L808.0,593.9 L808.5,594.9 L809.0,594.8 L809.5,594.5 L810.0,594.7 L810.5,594.8 L811.0,594.7 L811.5,594.7 L812.0,594.6 L812.5,594.8 L813.0,594.7 L813.5,594.7 L814.0,594.8 L814.5,594.4 L815.0,594.9 L815.5,594.5 L816.0,594.8 L816.5,595.0 L817.0,594.9 L817.5,594.7 L818.0,594.9 L818.5,594.2 L819.0,594.8 L819.5,594.4 L820.0,594.7 L820.5,594.8 L821.0,594.1 L821.5,594.7 L822.0,594.2 L822.5,594.9 L823.0,594.4 L823.5,594.7 L824.0,594.6 L824.5,594.8 L825.0,595.0 L825.5,594.5 L826.0,594.4 L826.5,594.6 L827.0,594.5 L827.5,595.0 L828.0,594.8 L828.5,594.5 L829.0,594.1 L829.5,594.6 L830.0,594.9 L830.5,594.7 L831.0,594.8 L831.5,594.5 L832.0,594.7 L832.5,595.0 L833.0,594.6 L833.5,594.5 L834.0,594.9 L834.5,594.8 L835.0,594.2 L835.5,594.7 L836.0,594.8 L836.5,594.6 L837.0,595.0 L837.5,594.4 L838.0,594.5 L838.5,594.7 L839.0,593.4 L839.5,595.0 L840.0,594.9 L840.5,595.0 L841.0,594.5 L841.5,594.5 L842.0,594.8 L842.5,594.9 L843.0,594.8 L843.5,594.4 L844.0,594.8 L844.5,594.5 L845.0,594.8 L845.5,594.9 L846.0,594.1 L846.5,594.7 L847.0,595.0 L847.5,594.1 L848.0,594.4 L848.5,594.4 L849.0,594.6 L849.5,594.5 L850.0,594.8 L850.5,594.7 L851.0,594.8 L851.5,594.1 L852.0,594.6 L852.5,594.6 L853.0,594.8 L853.5,594.0 L854.0,594.1 L854.5,594.3 L855.0,594.9 L855.5,594.4 L856.0,594.3 L856.5,594.7 L857.0,595.0 L857.5,594.8 L858.0,594.2 L858.5,595.0 L859.0,594.7 L859.5,594.5 L860.0,594.4 L860.5,594.9 L861.0,594.9 L861.5,594.6 L862.0,594.8 L862.5,594.6 L863.0,594.7 L863.5,594.5 L864.0,594.5 L864.5,594.8 L865.0,594.1 L865.5,594.8 L866.0,594.4 L866.5,594.9 L867.0,594.8 L867.5,595.0 L868.0,594.8 L868.5,594.9 L869.0,595.0 L869.5,594.9 L870.0,594.5 L870.5,594.8 L871.0,594.5 L871.5,594.5 L872.0,595.0 L872.5,594.6 L873.0,594.6 L873.5,594.6 L874.0,593.8 L874.5,594.6 L875.0,594.6 L875.5,594.8 L876.0,593.7 L876.5,594.7 L877.0,594.4 L877.5,594.8 L878.0,594.6 L878.5,595.0 L879.0,594.6 L879.5,594.9 L880.0,594.9 L880.5,594.0 L881.0,594.7 L881.5,594.8 L882.0,594.5 L882.5,595.0 L883.0,594.6 L883.5,594.7 L884.0,594.5 L884.5,593.9 L885.0,594.5 L885.5,594.7 L886.0,594.8 L886.5,594.5 L887.0,594.8 L887.5,594.5 L888.0,594.9 L888.5,594.6 L889.0,594.8 L889.5,594.3 L890.0,594.6 L890.5,594.0 L891.0,594.6 L891.5,594.7 L892.0,594.7 L892.5,595.0 L893.0,594.9 L893.5,594.8 L894.0,594.8 L894.5,594.9 L895.0,595.0 L895.5,594.8 L896.0,594.7 L896.5,594.8 L897.0,594.9 L897.5,594.8 L898.0,594.4 L898.5,594.4 L899.0,594.3 L899.5,594.7 L900.0,594.8 L900.5,594.9 L901.0,594.0 L901.5,594.2 L902.0,594.8 L902.5,594.0 L903.0,594.3 L903.5,594.4 L904.0,594.6 L904.5,594.8 L905.0,594.8 L905.5,594.3 L906.0,594.7 L906.5,594.3 L907.0,594.6 L907.5,594.9 L908.0,594.4 L908.5,594.8 L909.0,594.5 L909.5,594.9 L910.0,594.3 L910.5,594.9 L911.0,594.6 L911.5,594.9 L912.0,594.8 L912.5,594.8 L913.0,594.4 L913.5,595.0 L914.0,594.8 L914.5,594.4 L915.0,595.0 L915.5,594.9 L916.0,594.5 L916.5,594.1 L917.0,594.4 L917.5,594.8 L918.0,593.6 L918.5,593.8 L919.0,594.0 L919.5,594.6 L920.0,594.9 L920.5,594.7 L921.0,594.4 L921.5,594.5 L922.0,593.3 L922.5,594.5 L923.0,594.3 L923.5,594.8 L924.0,594.9 L924.5,594.8 L925.0,594.8 L925.5,595.0 L926.0,594.3 L926.5,594.8 L927.0,594.5 L927.5,594.9 L928.0,594.8 L928.5,594.9 L929.0,594.8 L929.5,594.3 L930.0,594.9 L930.5,594.9 L931.0,594.9 L931.5,594.5 L932.0,593.8 L932.5,594.6 L933.0,594.7 L933.5,594.5 L934.0,594.5 L934.5,595.0 L935.0,594.3 L935.5,594.5 L936.0,594.6 L936.5,594.7 L937.0,595.0 L937.5,593.8 L938.0,594.6 L938.5,594.7 L939.0,593.5 L939.5,594.1 L940.0,594.8 L940.5,595.0 L941.0,594.2 L941.5,594.7 L942.0,593.8 L942.5,594.5 L943.0,594.1 L943.5,594.9 L944.0,594.1 L944.5,594.6 L945.0,594.9 L945.5,594.4 L946.0,594.3 L946.5,594.5 L947.0,594.2 L947.5,594.9 L948.0,594.7 L948.5,594.6 L949.0,594.5 L949.5,594.9 L950.0,594.6 L950.5,594.8 L951.0,594.8 L951.5,594.9 L952.0,594.7 L952.5,594.7 L953.0,594.6 L953.5,594.8 L954.0,594.7 L954.5,594.9 L955.0,594.5 L955.5,594.5 L956.0,595.0 L956.5,594.9 L957.0,594.9 L957.5,594.7 L958.0,594.6 L958.5,593.7 L959.0,595.0 L959.5,594.9 L960.0,594.6 L960.5,594.8 L961.0,595.0 L961.5,594.8 L962.0,594.4 L962.5,594.6 L963.0,595.0 L963.5,594.7 L964.0,593.7 L964.5,594.0 L965.0,593.9 L965.5,594.8 L966.0,594.8 L966.5,594.9 L967.0,594.9 L967.5,594.8 L968.0,594.1 L968.5,594.8 L969.0,594.4 L969.5,594.9 L970.0,594.7 L970.5,594.6 L971.0,594.9 L971.5,594.7 L972.0,594.8 L972.5,594.8 L973.0,594.4 L973.5,594.9 L974.0,594.3 L974.5,594.1 L975.0,594.3 L975.5,594.8 L976.0,594.4 L976.5,594.5 L977.0,594.0 L977.5,594.8 L978.0,594.8 L978.5,594.6 L979.0,594.3 L979.5,594.3 L980.0,594.7 L980.5,594.4 L981.0,594.0 L981.5,594.9 L982.0,594.5 L982.5,594.2 L983.0,594.8 L983.5,594.9 L984.0,594.8 L984.5,594.3 L985.0,594.4 L985.5,595.0 L986.0,594.2 L986.5,594.8 L987.0,594.8 L987.5,594.6 L988.0,594.6 L988.5,594.4 L989.0,593.9 L989.5,594.5 L990.0,595.0 L990.5,594.8 L991.0,594.3 L991.5,594.4 L992.0,593.8 L992.5,594.9 L993.0,594.8 L993.5,594.9 L994.0,595.0 L994.5,594.5 L995.0,594.9 L995.5,594.5 L996.0,594.9 L996.5,594.5 L997.0,594.3 L997.5,594.7 L998.0,594.8 L998.5,594.8 L999.0,594.5 L999.5,594.4 L1000.0,594.6 L1000.5,594.6 L1001.0,595.0 L1001.5,593.7 L1002.0,594.0 L1002.5,594.9 L1003.0,594.6 L1003.5,594.8 L1004.0,595.0 L1004.5,594.5 L1005.0,594.8 L1005.5,594.6 L1006.0,594.3 L1006.5,594.1 L1007.0,594.8 L1007.5,594.4 L1008.0,594.7 L1008.5,594.5 L1009.0,595.0 L1009.5,594.9 L1010.0,594.3 L1010.5,594.4 L1011.0,594.8 L1011.5,594.6 L1012.0,594.6 L1012.5,594.8 L1013.0,594.9 L1013.5,594.9 L1014.0,594.1 L1014.5,594.8 L1015.0,594.9 L1015.5,594.2 L1016.0,594.4 L1016.5,594.2 L1017.0,594.9 L1017.5,594.0 L1018.0,594.7 L1018.5,594.8 L1019.0,594.7 L1019.5,594.2 L1020.0,594.5 L1020.5,594.7 L1021.0,594.8 L1021.5,594.6 L1022.0,594.8 L1022.5,594.8 L1023.0,594.2 L1023.5,594.7 L1024.0,594.7 L1024.5,593.9 L1025.0,594.7 L1025.5,594.0 L1026.0,594.5 L1026.5,593.6 L1027.0,594.4 L1027.5,594.5 L1028.0,594.9 L1028.5,594.2 L1029.0,594.7 L1029.5,594.3 L1030.0,594.9 L1030.5,594.3 L1031.0,594.9 L1031.5,594.2 L1032.0,594.8 L1032.5,594.9 L1033.0,595.0 L1033.5,594.6 L1034.0,594.1 L1034.5,594.2 L1035.0,594.7 L1035.5,594.3 L1036.0,594.9 L1036.5,594.9 L1037.0,594.6 L1037.5,594.7 L1038.0,594.8 L1038.5,594.8 L1039.0,594.4 L1039.5,594.7 L1040.0,594.7 L1040.5,593.9 L1041.0,594.4 L1041.5,594.8 L1042.0,593.8 L1042.5,595.0 L1043.0,594.4 L1043.5,594.7 L1044.0,594.7 L1044.5,594.9 L1045.0,594.7 L1045.5,594.2 L1046.0,594.7 L1046.5,594.9 L1047.0,595.0 L1047.5,594.9 L1048.0,594.4 L1048.5,594.7 L1049.0,594.9 L1049.5,594.7 L1050.0,594.6 L1050.5,593.9 L1051.0,594.7 L1051.5,594.6 L1052.0,594.8 L1052.5,594.9 L1053.0,594.8 L1053.5,594.7 L1054.0,594.3 L1054.5,594.8 L1055.0,594.9 L1055.5,594.8 L1056.0,594.4 L1056.5,594.4 L1057.0,594.3 L1057.5,594.8 L1058.0,594.7 L1058.5,594.2 L1059.0,594.7 L1059.5,595.0 L1060.0,595.0 L1060.5,594.4 L1061.0,594.3 L1061.5,594.3 L1062.0,594.5 L1062.5,594.9 L1063.0,594.3 L1063.5,594.3 L1064.0,593.7 L1064.5,594.6 L1065.0,594.2 L1065.5,594.6 L1066.0,594.8 L1066.5,594.7 L1067.0,594.3 L1067.5,594.6 L1068.0,594.5 L1068.5,594.9 L1069.0,594.6 L1069.5,594.7 L1070.0,594.9 L1070.5,594.3 L1071.0,594.2 L1071.5,595.0 L1072.0,594.2 L1072.5,594.9 L1073.0,594.8 L1073.5,594.8 L1074.0,594.2 L1074.5,594.9 L1075.0,594.8 L1075.5,594.8 L1076.0,594.2 L1076.5,594.1 L1077.0,594.8 L1077.5,594.9 L1078.0,594.8 L1078.5,594.4 L1079.0,594.2 L1079.5,594.9 L1080.0,594.8 L1080.5,595.0 L1081.0,594.8 L1081.5,594.9 L1082.0,594.8 L1082.5,595.0 L1083.0,594.3 L1083.5,594.6 L1084.0,594.6 L1084.5,594.9 L1085.0,595.0 L1085.5,594.8 L1086.0,594.7 L1086.5,594.8 L1087.0,594.2 L1087.5,594.9 L1088.0,594.4 L1088.5,594.9 L1089.0,594.8 L1089.5,594.7 L1090.0,594.7 L1090.5,594.8 L1091.0,594.2 L1091.5,594.9 L1092.0,594.6 L1092.5,594.8 L1093.0,594.0 L1093.5,594.6 L1094.0,594.6 L1094.5,594.2 L1095.0,594.2 L1095.5,594.5 L1096.0,594.8 L1096.5,594.1 L1097.0,594.6 L1097.5,595.0 L1098.0,594.6 L1098.5,594.5 L1099.0,594.6 L1099.5,595.0 L1100.0,594.7 L1100.5,593.6 L1101.0,594.4 L1101.5,594.5 L1102.0,594.9 L1102.5,594.4 L1103.0,594.1 L1103.5,594.8 L1104.0,594.8 L1104.5,594.5 L1105.0,594.4 L1105.5,594.3 L1106.0,594.7 L1106.5,594.8 L1107.0,594.4 L1107.5,594.9 L1108.0,594.5 L1108.5,593.9 L1109.0,594.8 L1109.5,594.1 L1110.0,594.4 L1110.5,593.7 L1111.0,594.8 L1111.5,594.3 L1112.0,594.1 L1112.5,594.4 L1113.0,594.2 L1113.5,593.7 L1114.0,594.2 L1114.5,594.0 L1115.0,594.8 L1115.5,594.8 L1116.0,594.6 L1116.5,594.8 L1117.0,594.7 L1117.5,595.0 L1118.0,594.4 L1118.5,594.7 L1119.0,594.8 L1119.5,594.7 L1120.0,594.2 L1120.5,593.8 L1121.0,594.3 L1121.5,594.9 L1122.0,594.5 L1122.5,594.4 L1123.0,594.7 L1123.5,594.1 L1124.0,594.2 L1124.5,594.7 L1125.0,594.6 L1125.5,594.9 L1126.0,594.9 L1126.5,594.3 L1127.0,594.9 L1127.5,593.7 L1128.0,594.5 L1128.5,594.6 L1129.0,594.8 L1129.5,594.7 L1130.0,594.8 L1130.5,594.4 L1131.0,594.8 L1131.5,594.5 L1132.0,594.9 L1132.5,595.0 L1133.0,594.6 L1133.5,594.5 L1134.0,595.0 L1134.5,594.4 L1135.0,594.9 L1135.5,595.0 L1136.0,594.8 L1136.5,594.8 L1137.0,594.6 L1137.5,594.8 L1138.0,594.0 L1138.5,594.9 L1139.0,594.1 L1139.5,594.4 L1140.0,594.8 L1140.5,594.9 L1141.0,595.0 L1141.5,594.3 L1142.0,594.7 L1142.5,594.8 L1143.0,594.5 L1143.5,594.2 L1144.0,594.5 L1144.5,594.9 L1145.0,594.8 L1145.5,594.3 L1146.0,594.8 L1146.5,595.0 L1147.0,594.9 L1147.5,594.9 L1148.0,595.0 L1148.5,594.9 L1149.0,594.3 L1149.5,594.9 L1150.0,594.5 L1150.5,595.0 L1151.0,594.7 L1151.5,594.6 L1152.0,594.2 L1152.5,594.2 L1153.0,594.8 L1153.5,594.5 L1154.0,594.3 L1154.5,594.4 L1155.0,594.6 L1155.5,594.5 L1156.0,594.6 L1156.5,594.5 L1157.0,593.7 L1157.5,594.7 L1158.0,594.5 L1158.5,594.9 L1159.0,594.8 L1159.5,594.8 L1160.0,594.7 L1160.5,595.0 L1161.0,594.9 L1161.5,594.1 L1162.0,594.7 L1162.5,594.8 L1163.0,594.2 L1163.5,594.9 L1164.0,594.7 L1164.5,594.9 L1165.0,594.6 L1165.5,594.9 L1166.0,594.5 L1166.5,595.0 L1167.0,594.3 L1167.5,594.4 L1168.0,593.7 L1168.5,593.9 L1169.0,594.0 L1169.5,594.0 L1170.0,594.9 L1170.5,594.4 L1171.0,594.9 L1171.5,594.3 L1172.0,594.4 L1172.5,594.9 L1173.0,594.7 L1173.5,594.9 L1174.0,594.4 L1174.5,595.0 L1175.0,594.4 L1175.5,594.2 L1176.0,594.8 L1176.5,594.9 L1177.0,594.4 L1177.5,594.6 L1178.0,595.0 L1178.5,594.6 L1179.0,594.3 L1179.5,594.6 L1180.0,594.6 L1180.5,594.9 L1181.0,594.3 L1181.5,594.8 L1182.0,594.4 L1182.5,594.3 L1183.0,594.5 L1183.5,594.9 L1184.0,594.6 L1184.5,594.9 L1185.0,594.8 L1185.5,594.5 L1186.0,594.3 L1186.5,594.7 L1187.0,594.9 L1187.5,595.0 L1188.0,594.8 L1188.5,595.0 L1189.0,594.7 L1189.5,594.7 L1190.0,594.8 L1190.5,594.6 L1191.0,595.0 L1191.5,594.1 L1192.0,594.2 L1192.5,594.8 L1193.0,594.2 L1193.5,591.0 L1194.0,591.6 L1194.5,592.2 L1195.0,592.8 L1195.5,593.4 L1196.0,594.0 L1196.5,590.9 L1197.0,591.5 L1197.5,592.1 L1198.0,592.7 L1198.5,593.3 L1199.0,593.9 L1199.5,594.5 L1200.0,594.6 L1200.5,593.9 L1201.0,594.9 L1201.5,595.0 L1202.0,594.7 L1202.5,594.6 L1203.0,594.7 L1203.5,594.8 L1204.0,594.8 L1204.5,595.0 L1205.0,594.3 L1205.5,594.6 L1206.0,594.9 L1206.5,590.5 L1207.0,591.1 L1207.5,591.7 L1208.0,592.3 L1208.5,592.9 L1209.0,590.5 L1209.5,591.1 L1210.0,591.7 L1210.5,592.3 L1211.0,592.9 L1211.5,590.5 L1212.0,591.1 L1212.5,591.7 L1213.0,592.3 L1213.5,592.9 L1214.0,593.5 L1214.5,594.1 L1215.0,594.6 L1215.5,594.1 L1216.0,594.8 L1216.5,594.7 L1217.0,594.5 L1217.5,594.8 L1218.0,594.7 L1218.5,594.6 L1219.0,594.6 L1219.5,594.7 L1220.0,595.0 L1220.5,595.0 L1221.0,594.9 L1221.5,595.0 L1222.0,594.8 L1222.5,594.6 L1223.0,590.7 L1223.5,591.3 L1224.0,591.9 L1224.5,592.5 L1225.0,593.1 L1225.5,593.7 L1226.0,594.3 L1226.5,594.8 L1227.0,594.2 L1227.5,593.9 L1228.0,594.8 L1228.5,594.7 L1229.0,594.6 L1229.5,594.6 L1230.0,594.9 L1230.5,594.0 L1231.0,594.8 L1231.5,594.8 L1232.0,594.4 L1232.5,594.8 L1233.0,594.9 L1233.5,594.5 L1234.0,594.3 L1234.5,595.0 L1235.0,594.3 L1235.5,594.0 L1236.0,594.3 L1236.5,594.3 L1237.0,594.5 L1237.5,594.9 L1238.0,594.6 L1238.5,594.8 L1239.0,594.5 L1239.5,595.0 L1240.0,594.9 L1240.5,594.5 L1241.0,594.8 L1241.5,594.8 L1242.0,594.5 L1242.5,594.8 L1243.0,594.6 L1243.5,594.9 L1244.0,595.0 L1244.5,591.0 L1245.0,591.6 L1245.5,592.2 L1246.0,592.8 L1246.5,593.4 L1247.0,594.0 L1247.5,593.8 L1248.0,594.6 L1248.5,594.3 L1249.0,594.6 L1249.5,594.9 L1250.0,594.3 L1250.5,593.9 L1251.0,594.9 L1251.5,594.4 L1252.0,594.7 L1252.5,594.8 L1253.0,594.6 L1253.5,593.9 L1254.0,594.8 L1254.5,595.0 L1255.0,594.9 L1255.5,593.9 L1256.0,593.8 L1256.5,595.0 L1257.0,594.7 L1257.5,594.4 L1258.0,594.2 L1258.5,594.7 L1259.0,594.4 L1259.5,594.6 L1260.0,594.6 L1260.5,595.0 L1261.0,595.0 L1261.5,590.5 L1262.0,591.1 L1262.5,591.7 L1263.0,592.3 L1263.5,592.9 L1264.0,593.5 L1264.5,590.5 L1265.0,591.1 L1265.5,591.7 L1266.0,592.3 L1266.5,592.9 L1267.0,593.5 L1267.5,590.5 L1268.0,591.1 L1268.5,591.7 L1269.0,592.3 L1269.5,592.9 L1270.0,593.5 L1270.5,594.1 L1271.0,594.4 L1271.5,594.6 L1272.0,594.5 L1272.5,594.5 L1273.0,594.6 L1273.5,593.5 L1274.0,590.6 L1274.5,591.2 L1275.0,591.8 L1275.5,592.4 L1276.0,593.0 L1276.5,593.6 L1277.0,594.2 L1277.5,593.9 L1278.0,594.8 L1278.5,594.0 L1279.0,594.9 L1279.5,594.7 L1280.0,594.2 L1280.5,595.0 L1281.0,594.6 L1281.5,595.0 L1282.0,594.7 L1282.5,594.4 L1283.0,594.8 L1283.5,595.0 L1284.0,590.7 L1284.5,591.3 L1285.0,591.9 L1285.5,592.5 L1286.0,593.1 L1286.5,593.7 L1287.0,594.3 L1287.5,594.4 L1288.0,594.5 L1288.5,595.0 L1289.0,594.3 L1289.5,594.9 L1290.0,594.4 L1290.5,594.0 L1291.0,594.6 L1291.5,594.6 L1292.0,594.4 L1292.5,594.5 L1293.0,594.7 L1293.5,595.0 L1294.0,590.9 L1294.5,591.5 L1295.0,592.1 L1295.5,592.7 L1296.0,593.3 L1296.5,593.9 L1297.0,594.5 L1297.5,594.6 L1298.0,594.7 L1298.5,594.1 L1299.0,594.0 L1299.5,594.9 L1300.0,590.7 L1300.5,591.3 L1301.0,591.9 L1301.5,592.5 L1302.0,593.1 L1302.5,593.7 L1303.0,594.3 L1303.5,594.0 L1304.0,594.9 L1304.5,594.6 L1305.0,594.8 L1305.5,590.5 L1306.0,591.1 L1306.5,591.7 L1307.0,592.3 L1307.5,592.9 L1308.0,593.5 L1308.5,594.1 L1309.0,594.2 L1309.5,594.8 L1310.0,594.5 L1310.5,594.7 L1311.0,594.8 L1311.5,594.7 L1312.0,594.0 L1312.5,594.8 L1313.0,594.8 L1313.5,590.5 L1314.0,591.1 L1314.5,591.7 L1315.0,592.3 L1315.5,592.9 L1316.0,593.5 L1316.5,594.1 L1317.0,594.7 L1317.5,594.7 L1318.0,594.3 L1318.5,594.0 L1319.0,594.8 L1319.5,594.4 L1320.0,594.7 L1320.5,594.5 L1321.0,594.6 L1321.5,594.7 L1322.0,594.8 L1322.5,594.3 L1323.0,591.0 L1323.5,591.6 L1324.0,592.2 L1324.5,592.8 L1325.0,593.4 L1325.5,594.0 L1326.0,594.5 L1326.5,594.9 L1327.0,594.7 L1327.5,594.9 L1328.0,594.6 L1328.5,593.8 L1329.0,594.6 L1329.5,594.7 L1330.0,594.4 L1330.5,594.6 L1331.0,594.7 L1331.5,594.5 L1332.0,594.5 L1332.5,594.9 L1333.0,594.9 L1333.5,594.5 L1334.0,594.5 L1334.5,594.8 L1335.0,594.6 L1335.5,594.2 L1336.0,594.3 L1336.5,590.5 L1337.0,591.1 L1337.5,591.7 L1338.0,592.3 L1338.5,592.9 L1339.0,593.5 L1339.5,590.5 L1340.0,591.1 L1340.5,591.7 L1341.0,592.3 L1341.5,592.9 L1342.0,593.5 L1342.5,594.1 L1343.0,594.6 L1343.5,590.5 L1344.0,591.1 L1344.5,591.7 L1345.0,592.3 L1345.5,592.9 L1346.0,593.5 L1346.5,594.1 L1347.0,594.7 L1347.5,594.7 L1348.0,590.7 L1348.5,591.3 L1349.0,591.9 L1349.5,592.5 L1350.0,593.1 L1350.5,593.7 L1351.0,594.3 L1351.5,594.6 L1352.0,594.7 L1352.5,594.8 L1353.0,594.5 L1353.5,594.7 L1354.0,594.9 L1354.5,594.8 L1355.0,594.6 L1355.5,594.7 L1356.0,594.4 L1356.5,594.2 L1357.0,595.0 L1357.5,594.8 L1358.0,594.9 L1358.5,590.6 L1359.0,591.2 L1359.5,591.8 L1360.0,592.4 L1360.5,593.0 L1361.0,593.6 L1361.5,594.2 L1362.0,594.6 L1362.5,594.5 L1363.0,594.3 L1363.5,594.8 L1364.0,594.2 L1364.5,594.5 L1365.0,594.5 L1365.5,594.9 L1366.0,594.9 L1366.5,594.8 L1367.0,594.7 L1367.5,594.1 L1368.0,594.8 L1368.5,594.5 L1369.0,594.7 L1369.5,594.9 L1370.0,593.6 L1370.5,595.0 L1371.0,594.5 L1371.5,593.6 L1372.0,594.6 L1372.5,590.5 L1373.0,591.1 L1373.5,591.7 L1374.0,592.3 L1374.5,592.9 L1375.0,593.5 L1375.5,590.5 L1376.0,591.1 L1376.5,591.7 L1377.0,592.3 L1377.5,592.9 L1378.0,593.5 L1378.5,594.1 L1379.0,594.6 L1379.5,590.5 L1380.0,591.1 L1380.5,591.7 L1381.0,592.3 L1381.5,592.9 L1382.0,593.5 L1382.5,590.5 L1383.0,591.1 L1383.5,591.7 L1384.0,592.3 L1384.5,592.9 L1385.0,593.5 L1385.5,594.1 L1386.0,590.7 L1386.5,591.3 L1387.0,591.9 L1387.5,592.5 L1388.0,593.1 L1388.5,593.7 L1389.0,594.3 L1389.5,594.4 L1390.0,594.9 L1390.5,594.8 L1391.0,594.0 L1391.5,590.9 L1392.0,591.5 L1392.5,592.1 L1393.0,592.7 L1393.5,593.3 L1394.0,593.9 L1394.5,594.3 L1395.0,594.5 L1395.5,594.7 L1396.0,594.7 L1396.5,594.5 L1397.0,594.4 L1397.5,590.7 L1398.0,591.3 L1398.5,591.9 L1399.0,592.5 L1399.5,593.1 L1400.0,594.7 L1400.5,594.9 L1401.0,594.9 L1401.5,594.9 L1402.0,594.8 L1402.5,594.8 L1403.0,594.8 L1403.5,594.7 L1404.0,594.9 L1404.5,594.6 L1405.0,594.7 L1405.5,594.8 L1406.0,594.9 L1406.5,594.5 L1407.0,594.8 L1407.5,594.6 L1408.0,594.8 L1408.5,594.6 L1409.0,594.9 L1409.5,594.9 L1410.0,594.9 L1410.5,595.0 L1411.0,594.9 L1411.5,594.8 L1412.0,594.8 L1412.5,594.7 L1413.0,594.8 L1413.5,594.7 L1414.0,594.8 L1414.5,594.9 L1415.0,594.6 L1415.5,594.8 L1416.0,594.9 L1416.5,594.7 L1417.0,594.7 L1417.5,594.9 L1418.0,594.8 L1418.5,594.9 L1419.0,594.9 L1419.5,594.9 L1420.0,594.8 L1420.5,594.9 L1421.0,594.8 L1421.5,594.9 L1422.0,594.7 L1422.5,595.0 L1423.0,594.5 L1423.5,594.8 L1424.0,594.7 L1424.5,594.6 L1425.0,594.7 L1425.5,595.0 L1426.0,594.7 L1426.5,594.9 L1427.0,594.8 L1427.5,594.7 L1428.0,594.7 L1428.5,595.0 L1429.0,594.9 L1429.5,594.8 L1430.0,594.4 L1430.5,594.6 L1431.0,594.9 L1431.5,594.7 L1432.0,594.9 L1432.5,594.8 L1433.0,594.9 L1433.5,594.9 L1434.0,595.0 L1434.5,594.9 L1435.0,594.9 L1435.5,594.8 L1436.0,594.7 L1436.5,594.7 L1437.0,594.6 L1437.5,594.8 L1438.0,594.5 L1438.5,595.0 L1439.0,595.0 L1439.5,595.0 L1440.0,594.6 L1440.5,594.8 L1441.0,594.7 L1441.5,595.0 L1442.0,594.9 L1442.5,594.5 L1443.0,594.9 L1443.5,595.0 L1444.0,594.7 L1444.5,594.8 L1445.0,595.0 L1445.5,594.6 L1446.0,594.9 L1446.5,594.9 L1447.0,594.8 L1447.5,595.0 L1448.0,594.7 L1448.5,594.9 L1449.0,594.8 L1449.5,594.7 L1450.0,594.7 L1450.5,594.7 L1451.0,594.9 L1451.5,594.9 L1452.0,594.7 L1452.5,595.0 L1453.0,595.0 L1453.5,594.7 L1454.0,594.8 L1454.5,594.5 L1455.0,595.0 L1455.5,594.9 L1456.0,594.8 L1456.5,594.9 L1457.0,594.5 L1457.5,594.4 L1458.0,594.4 L1458.5,595.0 L1459.0,594.9 L1459.5,594.9 L1460.0,594.9 L1460.5,594.8 L1461.0,594.9 L1461.5,595.0 L1462.0,594.7 L1462.5,594.5 L1463.0,594.7 L1463.5,594.8 L1464.0,594.7 L1464.5,594.8 L1465.0,594.9 L1465.5,594.8 L1466.0,594.9 L1466.5,594.4 L1467.0,594.9 L1467.5,594.9 L1468.0,594.5 L1468.5,594.9 L1469.0,594.9 L1469.5,594.9 L1470.0,594.9 L1470.5,594.4 L1471.0,594.7 L1471.5,594.7 L1472.0,594.5 L1472.5,595.0 L1473.0,594.8 L1473.5,594.8 L1474.0,595.0 L1474.5,594.7 L1475.0,594.9 L1475.5,594.9 L1476.0,594.6 L1476.5,594.7 L1477.0,594.9 L1477.5,594.9 L1478.0,594.6 L1478.5,594.9 L1479.0,594.6 L1479.5,594.7 L1480.0,594.9 L1480.5,595.0 L1481.0,594.9 L1481.5,594.7 L1482.0,594.9 L1482.5,594.8 L1483.0,594.5 L1483.5,594.6 L1484.0,594.7 L1484.5,594.9 L1485.0,594.7 L1485.5,594.9 L1486.0,594.8 L1486.5,594.9 L1487.0,594.3 L1487.5,595.0 L1488.0,595.0 L1488.5,594.9 L1489.0,594.8 L1489.5,594.9 L1490.0,594.9 L1490.5,594.9 L1491.0,594.8 L1491.5,594.8 L1492.0,594.9 L1492.5,594.9 L1493.0,594.9 L1493.5,594.7 L1494.0,594.9 L1494.5,595.0 L1495.0,594.9 L1495.5,594.6 L1496.0,594.9 L1496.5,594.4 L1497.0,594.9 L1497.5,594.8 L1498.0,594.9 L1498.5,594.7 L1499.0,595.0 L1499.5,594.8 L1500.0,594.9 L1500.5,594.4 L1501.0,594.9 L1501.5,595.0 L1502.0,594.7 L1502.5,594.8 L1503.0,594.7 L1503.5,594.4 L1504.0,594.8 L1504.5,594.9 L1505.0,594.9 L1505.5,595.0 L1506.0,595.0 L1506.5,594.5 L1507.0,594.7 L1507.5,595.0 L1508.0,594.8 L1508.5,594.8 L1509.0,594.9 L1509.5,594.9 L1510.0,594.6 L1510.5,594.5 L1511.0,594.7 L1511.5,594.7 L1512.0,594.8 L1512.5,594.9 L1513.0,594.9 L1513.5,594.2 L1514.0,594.6 L1514.5,594.9 L1515.0,594.7 L1515.5,594.8 L1516.0,594.4 L1516.5,594.7 L1517.0,594.9 L1517.5,595.0 L1518.0,594.7 L1518.5,594.6 L1519.0,595.0 L1519.5,594.8 L1520.0,594.6 L1520.5,594.7 L1521.0,594.8 L1521.5,594.9 L1522.0,594.9 L1522.5,595.0 L1523.0,595.0 L1523.5,594.7 L1524.0,594.9 L1524.5,594.7 L1525.0,594.6 L1525.5,594.9 L1526.0,594.9 L1526.5,594.7 L1527.0,594.8 L1527.5,595.0 L1528.0,595.0 L1528.5,594.7 L1529.0,594.8 L1529.5,594.9 L1530.0,594.9 L1530.5,594.8 L1531.0,594.5 L1531.5,594.9 L1532.0,594.9 L1532.5,594.6 L1533.0,595.0 L1533.5,594.8 L1534.0,594.9 L1534.5,594.7 L1535.0,595.0 L1535.5,595.0 L1536.0,594.7 L1536.5,594.8 L1537.0,595.0 L1537.5,594.7 L1538.0,594.8 L1538.5,594.9 L1539.0,594.9 L1539.5,594.3 L1540.0,594.7 L1540.5,594.9 L1541.0,594.8 L1541.5,594.9 L1542.0,595.0 L1542.5,594.7 L1543.0,594.8 L1543.5,594.8 L1544.0,594.6 L1544.5,595.0 L1545.0,594.9 L1545.5,594.8 L1546.0,594.8 L1546.5,594.9 L1547.0,594.9 L1547.5,595.0 L1548.0,594.6 L1548.5,594.9 L1549.0,594.9 L1549.5,594.7 L1550.0,594.7 L1550.5,594.7 L1551.0,595.0 L1551.5,594.9 L1552.0,594.7 L1552.5,594.9 L1553.0,594.9 L1553.5,594.7 L1554.0,594.9 L1554.5,594.4 L1555.0,594.5 L1555.5,594.8 L1556.0,594.9 L1556.5,594.9 L1557.0,594.7 L1557.5,595.0 L1558.0,594.8 L1558.5,594.7 L1559.0,594.1 L1559.5,594.5 L1560.0,594.6 L1560.5,594.7 L1561.0,594.9 L1561.5,594.9 L1562.0,594.9 L1562.5,594.6 L1563.0,594.4 L1563.5,594.8 L1564.0,594.9 L1564.5,594.6 L1565.0,594.9 L1565.5,594.6 L1566.0,594.6 L1566.5,595.0 L1567.0,595.0 L1567.5,594.9 L1568.0,595.0 L1568.5,594.9 L1569.0,595.0 L1569.5,594.7 L1570.0,594.9 L1570.5,594.9 L1571.0,594.5 L1571.5,594.5 L1572.0,594.7 L1572.5,594.8 L1573.0,594.7 L1573.5,594.8 L1574.0,594.9 L1574.5,595.0 L1575.0,595.0 L1575.5,595.0 L1576.0,594.8 L1576.5,594.8 L1577.0,594.8 L1577.5,594.8 L1578.0,595.0 L1578.5,594.6 L1579.0,594.7 L1579.5,594.7 L1580.0,594.7 L1580.5,594.8 L1581.0,594.8 L1581.5,594.8 L1582.0,594.9 L1582.5,594.4 L1583.0,595.0 L1583.5,594.6 L1584.0,594.8 L1584.5,595.0 L1585.0,594.9 L1585.5,594.5 L1586.0,594.9 L1586.5,594.8 L1587.0,594.7 L1587.5,594.9 L1588.0,594.8 L1588.5,594.7 L1589.0,594.9 L1589.5,594.8 L1590.0,595.0 L1590.5,594.9 L1591.0,594.9 L1591.5,594.5 L1592.0,594.9 L1592.5,595.0 L1593.0,595.0 L1593.5,594.9 L1593.5,597 Z" fill="#12a5ca" stroke="none"/>
  <rect x="1193" y="519" width="12" height="78" fill="#b8c2c9" fill-opacity="0.9"/>
  <rect x="78.5" y="518.5" width="1515" height="79" fill="none" stroke="#4a5b66" stroke-width="1"/>

  <!-- bottom strip line -->
  <path d="M82,747.4 H323.6 V740.6 H1596.5" fill="none" stroke="#0aa8cf" stroke-width="1.5"/>
</svg>

<div class="t" style="left:83px;top:27.3px;font-size:12.8px;color:#4a5863">Lock Y-axis</div>
<div class="t" style="left:1502px;top:28px;font-size:11.8px;color:#b5c0c6">LIVE VIEW</div>

<div class="btn" style="left:631px">10ms</div>
<div class="btn" style="left:703px">100ms</div>
<div class="btn" style="left:775px">1s</div>
<div class="btn" style="left:847px">3s</div>
<div class="btn" style="left:919px">10s</div>
<div class="btn" style="left:991px">1min</div>

<div class="t" style="left:812px;top:54px;font-size:11px;color:#4a5863">&#916;180.7ms</div>
<div class="t" style="left:812px;top:494px;font-size:11px;color:#4a5863">&#916;180.7ms</div>

<div class="t" style="left:78px;top:616.5px;font-size:9.4px;color:#4a5863">WINDOW</div>
<div class="t" style="left:840px;top:616.5px;font-size:9.2px;color:#4a5863">SELECTION</div>

<div class="abs" style="left:78px;top:632px;width:754px;height:58px;border:1px solid #a9b8c1"></div>
<div class="abs" style="left:262px;top:632px;width:1px;height:58px;background:#a9b8c1"></div>
<div class="abs" style="left:455px;top:632px;width:1px;height:58px;background:#a9b8c1"></div>
<div class="abs" style="left:647px;top:632px;width:1px;height:58px;background:#a9b8c1"></div>
<div class="cell" style="left:78px;width:184px"><div class="v">8.08<small>mA</small></div><div class="l">average</div></div>
<div class="cell" style="left:262px;width:193px"><div class="v">23.44<small>mA</small></div><div class="l">max</div></div>
<div class="cell" style="left:455px;width:192px"><div class="v">180.7<small>ms</small></div><div class="l">time</div></div>
<div class="cell" style="left:647px;width:185px"><div class="v">1.46<small>mC</small></div><div class="l">charge</div></div>

<div class="abs" style="left:840px;top:632px;width:754px;height:58px;border:1px solid #a9b8c1;background:#cfd8de"></div>
<div class="t" style="left:840px;width:754px;top:655px;font-size:11.6px;color:#44525c;text-align:center">Hold SHIFT+LEFT CLICK and DRAG to make a selection</div>

<div class="abs" style="left:1394px;top:614px;width:200px;height:14px;border:1px solid #e0e5e8"></div>
<div class="abs" style="left:1497px;top:614px;width:61px;height:14px;border:1px solid #90a0a9"></div>
<div class="t" style="left:1396.5px;top:616px;font-size:9.2px;color:#c5cdd2">ZOOM TO SELECTION</div>
<div class="t" style="left:1500.5px;top:616px;font-size:9.2px;color:#455a64">SELECT ALL</div>
<div class="t" style="left:1561px;top:616px;font-size:9.2px;color:#c5cdd2">CLEAR</div>

<div class="t" style="left:37px;top:737px;font-size:13px;color:#4a5863">0</div>
</body></html>
